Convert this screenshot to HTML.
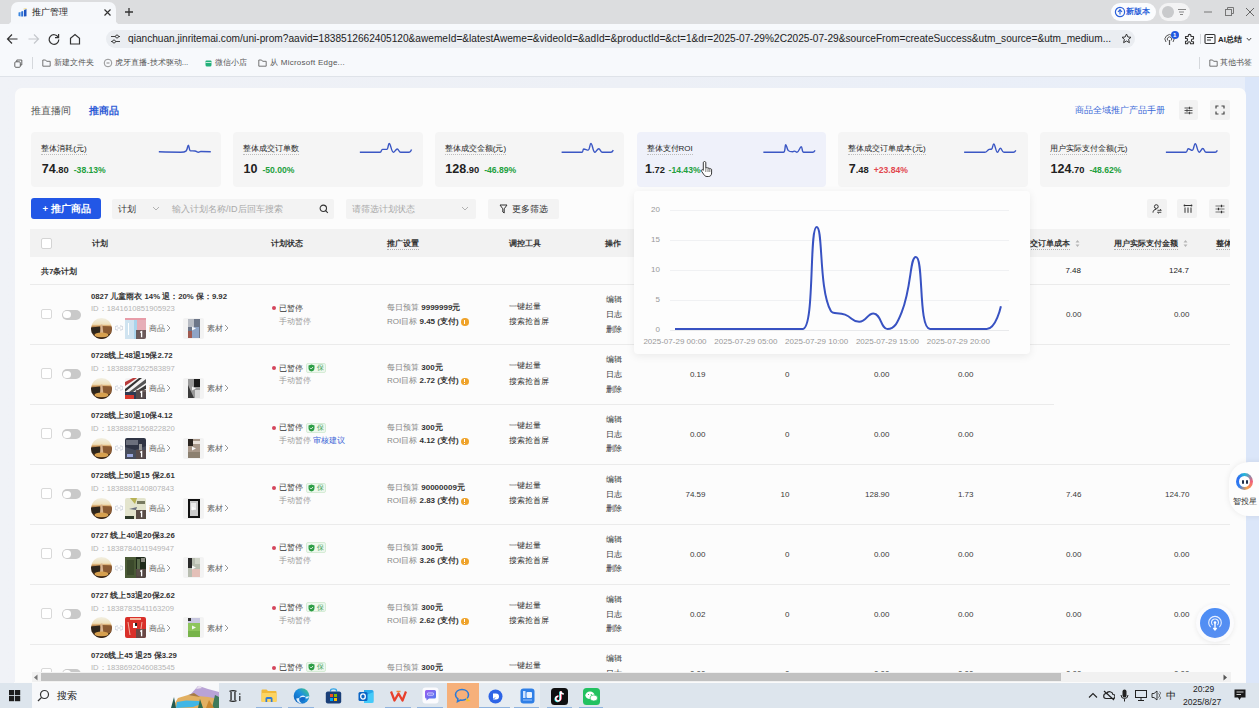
<!DOCTYPE html>
<html><head><meta charset="utf-8"><style>
html,body{margin:0;padding:0}
body{width:1259px;height:708px;overflow:hidden;position:relative;font-family:"Liberation Sans",sans-serif;background:#fff}
.r{position:absolute}
.t{position:absolute;white-space:nowrap}
b{font-weight:700}
</style></head><body>
<div class="r" style="left:0.0px;top:0.0px;width:1259.0px;height:24.0px;background:#dcdddf;"></div>
<div class="r" style="left:10.5px;top:1.5px;width:105.5px;height:23.0px;background:#f6f8fb;border-radius:7px 7px 0 0"></div>
<div class="r" style="left:6.5px;top:20.0px;width:4.0px;height:4.0px;background:radial-gradient(circle at 0 0,#dcdddf 4px,#f6f8fb 4.5px);"></div>
<div class="r" style="left:116.0px;top:20.0px;width:4.0px;height:4.0px;background:radial-gradient(circle at 100% 0,#dcdddf 4px,#f6f8fb 4.5px);"></div>
<svg class="r" style="left:17.5px;top:7.5px;" width="9" height="9" viewBox="0 0 9 9"><path d="M0.5 4.5L2.5 4V8.5L0.5 8Z" fill="#3a86e0"/><path d="M3.2 3.5L5.2 3V8.5L3.2 8.5Z" fill="#2a6fd6"/><path d="M6 2L8.5 1V8.2L6 8.5Z" fill="#1f55c0"/><path d="M5.5 1L8.5 0.5" stroke="#f5d36a" stroke-width="0.8"/></svg>
<div class="t " style="left:31.5px;top:5.0px;font-size:8.8px;line-height:14px;color:#222;font-weight:400;">推广管理</div>
<svg class="r" style="left:102.5px;top:7.5px;" width="9" height="9" viewBox="0 0 9 9"><path d="M1.5 1.5L7.5 7.5M7.5 1.5L1.5 7.5" stroke="#333" stroke-width="1.2"/></svg>
<svg class="r" style="left:124px;top:7px;" width="10" height="10" viewBox="0 0 10 10"><path d="M5 1V9M1 5H9" stroke="#333" stroke-width="1.3"/></svg>
<div class="r" style="left:1111.0px;top:3.0px;width:45.0px;height:17.5px;background:#fbfcfe;border-radius:9px"></div>
<svg class="r" style="left:1114px;top:6px;" width="12" height="12" viewBox="0 0 12 12"><circle cx="6" cy="6" r="4.6" fill="none" stroke="#2b5fd9" stroke-width="1.2"/><path d="M6 3.6V8.4M4 6L6 3.6 8 6" stroke="#2b5fd9" stroke-width="1.1" fill="none"/></svg>
<div class="t " style="left:1126.0px;top:5.0px;font-size:8px;line-height:14px;color:#2b5fd9;font-weight:700;">新版本</div>
<div class="r" style="left:1159.0px;top:3.0px;width:31.0px;height:17.5px;background:#f3f3f4;border-radius:9px"></div>
<div class="r" style="left:1162.0px;top:5.5px;width:12.0px;height:12.0px;background:#c9cacc;border-radius:50%"></div>
<svg class="r" style="left:1177px;top:8px;" width="10" height="8" viewBox="0 0 10 8"><path d="M1 1.5H9M2 4H7M3 6.5H6" stroke="#888" stroke-width="1.2"/></svg>
<svg class="r" style="left:1203px;top:6px;" width="10" height="12" viewBox="0 0 10 12"><path d="M1 6H9" stroke="#777" stroke-width="1"/></svg>
<svg class="r" style="left:1224px;top:6px;" width="10" height="12" viewBox="0 0 10 12"><rect x="1.5" y="3.5" width="6" height="6" fill="none" stroke="#777"/><path d="M3.5 3.5V1.5H9.5V7.5H7.5" fill="none" stroke="#777"/></svg>
<svg class="r" style="left:1245px;top:7px;" width="10" height="10" viewBox="0 0 10 10"><path d="M1 1L9 9M9 1L1 9" stroke="#666" stroke-width="1"/></svg>
<div class="r" style="left:0.0px;top:24.0px;width:1259.0px;height:53.0px;background:#f7f9fc;"></div>
<svg class="r" style="left:6px;top:33px;" width="13" height="12" viewBox="0 0 13 12"><path d="M11.5 6H1.5M6 1.5L1.5 6 6 10.5" fill="none" stroke="#333" stroke-width="1.2"/></svg>
<svg class="r" style="left:27px;top:33px;" width="13" height="12" viewBox="0 0 13 12"><path d="M1.5 6H11.5M7 1.5L11.5 6 7 10.5" fill="none" stroke="#c5c8cc" stroke-width="1.2"/></svg>
<svg class="r" style="left:48px;top:33px;" width="12" height="12" viewBox="0 0 12 12"><path d="M10.2 4.2A4.8 4.8 0 1 0 10.8 6.5" fill="none" stroke="#333" stroke-width="1.2"/><path d="M10.6 1V4.6H7" fill="none" stroke="#333" stroke-width="1.2"/></svg>
<svg class="r" style="left:69px;top:33px;" width="12" height="12" viewBox="0 0 12 12"><path d="M1.5 11V5.2L6 1.5 10.5 5.2V11Z" fill="none" stroke="#333" stroke-width="1.2"/></svg>
<div class="r" style="left:106.0px;top:30.0px;width:1029.0px;height:17.5px;background:#eaedf1;border-radius:9px"></div>
<svg class="r" style="left:110px;top:34px;" width="11" height="10" viewBox="0 0 11 10"><path d="M1 2.5H5.5M8.5 2.5H10M1 7.5H2.5M5.5 7.5H10" stroke="#444" stroke-width="1"/><circle cx="7" cy="2.5" r="1.5" fill="none" stroke="#444"/><circle cx="4" cy="7.5" r="1.5" fill="none" stroke="#444"/></svg>
<div class="t url" style="left:128.0px;top:32.0px;font-size:10.15px;line-height:14px;color:#222;font-weight:400;">qianchuan.jinritemai.com/uni-prom?aavid=1838512662405120&amp;awemeId=&amp;latestAweme=&amp;videoId=&amp;adId=&amp;productId=&amp;ct=1&amp;dr=2025-07-29%2C2025-07-29&amp;sourceFrom=createSuccess&amp;utm_source=&amp;utm_medium...</div>
<svg class="r" style="left:1121px;top:33px;" width="11" height="11" viewBox="0 0 11 11"><path d="M5.5 1L6.9 4 10 4.3 7.6 6.4 8.4 9.7 5.5 8 2.6 9.7 3.4 6.4 1 4.3 4.1 4Z" fill="none" stroke="#333" stroke-width="1"/></svg>
<svg class="r" style="left:1163px;top:33px;" width="13" height="13" viewBox="0 0 13 13"><path d="M3 9A4.5 4.5 0 1 1 10 9" fill="none" stroke="#555" stroke-width="1"/><path d="M4.8 7.5A2.2 2.2 0 1 1 8.2 7.5" fill="none" stroke="#555" stroke-width="1"/><path d="M6.5 7V12" stroke="#555" stroke-width="1.2"/></svg>
<div class="r" style="left:1171.0px;top:31.0px;width:8.0px;height:8.0px;background:#2259e0;border-radius:50%"></div>
<div class="t " style="left:1173.0px;top:31.0px;font-size:6px;line-height:8px;color:#fff;font-weight:700;">1</div>
<svg class="r" style="left:1184px;top:33px;" width="12" height="12" viewBox="0 0 12 12"><path d="M1.5 3.5H4.2V2.8A1.4 1.4 0 0 1 7 2.8V3.5H9.5V6H8.8A1.4 1.4 0 0 0 8.8 8.8H9.5V10.8H6.5V10.2A1.4 1.4 0 0 0 3.7 10.2V10.8H1.5V8.2H2.2A1.4 1.4 0 0 0 2.2 5.4H1.5Z" fill="none" stroke="#333" stroke-width="1.1" stroke-linejoin="round"/></svg>
<div class="r" style="left:1200.0px;top:34.0px;width:1.0px;height:10.0px;background:#d5d8dc;"></div>
<svg class="r" style="left:1204px;top:33px;" width="12" height="12" viewBox="0 0 12 12"><rect x="1" y="1.5" width="10" height="9" rx="1" fill="none" stroke="#333" stroke-width="1.1"/><path d="M3 4.5H9M3 7H7" stroke="#333" stroke-width="1"/></svg>
<div class="t " style="left:1218.0px;top:32.5px;font-size:7.8px;line-height:14px;color:#222;font-weight:700;">AI总结</div>
<svg class="r" style="left:1246px;top:37px;" width="6" height="5" viewBox="0 0 6 5"><path d="M0.8 1L3 3.4 5.2 1" fill="none" stroke="#444" stroke-width="1"/></svg>
<svg class="r" style="left:14px;top:58.5px;" width="9" height="9" viewBox="0 0 9 9"><rect x="0.8" y="2.8" width="5.5" height="5.5" rx="1" fill="none" stroke="#555" stroke-width="0.9"/><path d="M2.8 2.8V1H7.8V6H6.3" fill="none" stroke="#555" stroke-width="0.9"/></svg>
<div class="r" style="left:32.0px;top:57.0px;width:1.0px;height:12.0px;background:#d5d8dc;"></div>
<svg class="r" style="left:42px;top:58.5px;" width="9" height="8" viewBox="0 0 9 8"><path d="M0.8 1H3.6L4.6 2.3H8.2V7.2H0.8Z" fill="none" stroke="#666" stroke-width="0.9"/></svg>
<div class="t " style="left:54.0px;top:56.0px;font-size:8px;line-height:14px;color:#555;font-weight:400;">新建文件夹</div>
<svg class="r" style="left:103px;top:58px;" width="10" height="10" viewBox="0 0 10 10"><circle cx="5" cy="5" r="3.8" fill="none" stroke="#888" stroke-width="0.9"/><path d="M3.5 5H6.5" stroke="#888"/></svg>
<div class="t " style="left:115.0px;top:56.0px;font-size:8px;line-height:14px;color:#555;font-weight:400;">虎牙直播-技术驱动...</div>
<svg class="r" style="left:205px;top:59.5px;" width="7" height="7" viewBox="0 0 7 7"><path d="M0.5 1.5Q0.5 0.5 1.5 0.5H5.5Q6.5 0.5 6.5 1.5V5Q6.5 6.5 5 6.5H2Q0.5 6.5 0.5 5Z" fill="#22b07a"/><path d="M0.5 2.5H6.5" stroke="#d8f5e8" stroke-width="0.9"/></svg>
<div class="t " style="left:215.0px;top:56.0px;font-size:8px;line-height:14px;color:#555;font-weight:400;">微信小店</div>
<svg class="r" style="left:258px;top:58.5px;" width="9" height="8" viewBox="0 0 9 8"><path d="M0.8 1H3.6L4.6 2.3H8.2V7.2H0.8Z" fill="none" stroke="#666" stroke-width="0.9"/></svg>
<div class="t " style="left:270.0px;top:56.0px;font-size:8px;line-height:14px;color:#555;font-weight:400;letter-spacing:0.25px">从 Microsoft Edge...</div>
<div class="r" style="left:1199.0px;top:57.0px;width:1.0px;height:12.0px;background:#d5d8dc;"></div>
<svg class="r" style="left:1209px;top:58.5px;" width="9" height="8" viewBox="0 0 9 8"><path d="M0.8 1H3.6L4.6 2.3H8.2V7.2H0.8Z" fill="none" stroke="#666" stroke-width="0.9"/></svg>
<div class="t " style="left:1220.0px;top:56.0px;font-size:8px;line-height:14px;color:#555;font-weight:400;">其他书签</div>
<div class="r" style="left:0.0px;top:76.0px;width:1259.0px;height:1.0px;background:#dfe3e9;"></div>
<div class="r" style="left:0.0px;top:77.0px;width:1259.0px;height:606.0px;background:linear-gradient(90deg,#f0f2f7 0%,#edf0f6 50%,#e8eef9 100%);"></div>
<div class="r" style="left:1245.0px;top:77.0px;width:14.0px;height:606.0px;background:#dbe6f9;"></div>
<div class="r" style="left:14.5px;top:88.3px;width:1231.0px;height:600.0px;background:#fcfcfc;border-radius:7px 7px 0 0"></div>
<div class="t " style="left:30.5px;top:104.0px;font-size:10.1px;line-height:14px;color:#555;font-weight:400;">推直播间</div>
<div class="t " style="left:88.5px;top:104.0px;font-size:9.9px;line-height:14px;color:#2e5bd6;font-weight:700;">推商品</div>
<div class="t " style="left:1075.0px;top:103.0px;font-size:9.2px;line-height:14px;color:#3b6ad8;font-weight:400;">商品全域推广产品手册</div>
<div class="r" style="left:1178.5px;top:99.8px;width:19.0px;height:20.0px;background:#f2f2f2;border-radius:2px"></div>
<svg class="r" style="left:1183.5px;top:105.5px;" width="9" height="9" viewBox="0 0 9 9"><path d="M0.5 2H8.5M0.5 4.5H8.5M0.5 7H8.5" stroke="#444" stroke-width="0.9"/><path d="M5.5 0.8V3.2M3 3.3V5.7M5.5 5.8V8.2" stroke="#444" stroke-width="1.1"/></svg>
<div class="r" style="left:1209.5px;top:99.8px;width:20.5px;height:20.0px;background:#f2f2f2;border-radius:2px"></div>
<svg class="r" style="left:1214.5px;top:105.2px;" width="10" height="10" viewBox="0 0 10 10"><path d="M1 3.5V1H3.5M6.5 1H9V3.5M9 6.5V9H6.5M3.5 9H1V6.5" fill="none" stroke="#444" stroke-width="1.2"/></svg>
<div class="r" style="left:31.3px;top:131.5px;width:189.7px;height:55.5px;background:#f5f5f5;border-radius:4px"></div>
<div class="t " style="left:41.3px;top:142.5px;font-size:8px;line-height:11px;color:#262626;font-weight:400;border-bottom:1px dotted #bdbdbd;line-height:11px">整体消耗(元)</div>
<div class="t" style="left:41.8px;top:159px;line-height:18px;color:#222;white-space:nowrap"><span style="font-size:12.5px;font-weight:700">74</span><span style="font-size:9.4px;font-weight:700">.80</span><span style="font-size:8.6px;font-weight:700;color:#22a03c;margin-left:5px">-38.13%</span></div>
<div class="r" style="left:233.1px;top:131.5px;width:189.7px;height:55.5px;background:#f5f5f5;border-radius:4px"></div>
<div class="t " style="left:243.1px;top:142.5px;font-size:8px;line-height:11px;color:#262626;font-weight:400;border-bottom:1px dotted #bdbdbd;line-height:11px">整体成交订单数</div>
<div class="t" style="left:243.55px;top:159px;line-height:18px;color:#222;white-space:nowrap"><span style="font-size:12.5px;font-weight:700">10</span><span style="font-size:9.4px;font-weight:700"></span><span style="font-size:8.6px;font-weight:700;color:#22a03c;margin-left:5px">-50.00%</span></div>
<div class="r" style="left:434.8px;top:131.5px;width:189.7px;height:55.5px;background:#f5f5f5;border-radius:4px"></div>
<div class="t " style="left:444.8px;top:142.5px;font-size:8px;line-height:11px;color:#262626;font-weight:400;border-bottom:1px dotted #bdbdbd;line-height:11px">整体成交金额(元)</div>
<div class="t" style="left:445.3px;top:159px;line-height:18px;color:#222;white-space:nowrap"><span style="font-size:12.5px;font-weight:700">128</span><span style="font-size:9.4px;font-weight:700">.90</span><span style="font-size:8.6px;font-weight:700;color:#22a03c;margin-left:5px">-46.89%</span></div>
<div class="r" style="left:636.5px;top:131.5px;width:189.7px;height:55.5px;background:#eff1fa;border-radius:4px"></div>
<div class="t " style="left:646.5px;top:142.5px;font-size:8px;line-height:11px;color:#262626;font-weight:400;border-bottom:1px dotted #bdbdbd;line-height:11px">整体支付ROI</div>
<div class="t" style="left:645.05px;top:159px;line-height:18px;color:#222;white-space:nowrap"><span style="font-size:12.5px;font-weight:700">1</span><span style="font-size:9.4px;font-weight:700">.72</span><span style="font-size:8.6px;font-weight:700;color:#22a03c;margin-left:3.5px">-14.43%</span></div>
<div class="r" style="left:838.3px;top:131.5px;width:189.7px;height:55.5px;background:#f5f5f5;border-radius:4px"></div>
<div class="t " style="left:848.3px;top:142.5px;font-size:8px;line-height:11px;color:#262626;font-weight:400;border-bottom:1px dotted #bdbdbd;line-height:11px">整体成交订单成本(元)</div>
<div class="t" style="left:848.8px;top:159px;line-height:18px;color:#222;white-space:nowrap"><span style="font-size:12.5px;font-weight:700">7</span><span style="font-size:9.4px;font-weight:700">.48</span><span style="font-size:8.6px;font-weight:700;color:#e2474f;margin-left:5px">+23.84%</span></div>
<div class="r" style="left:1040.0px;top:131.5px;width:189.7px;height:55.5px;background:#f5f5f5;border-radius:4px"></div>
<div class="t " style="left:1050.0px;top:142.5px;font-size:8px;line-height:11px;color:#262626;font-weight:400;border-bottom:1px dotted #bdbdbd;line-height:11px">用户实际支付金额(元)</div>
<div class="t" style="left:1050.55px;top:159px;line-height:18px;color:#222;white-space:nowrap"><span style="font-size:12.5px;font-weight:700">124</span><span style="font-size:9.4px;font-weight:700">.70</span><span style="font-size:8.6px;font-weight:700;color:#22a03c;margin-left:5px">-48.62%</span></div>
<div class="r" style="left:30.5px;top:198.0px;width:70.0px;height:20.5px;background:#2257e6;border-radius:3px"></div>
<div class="t " style="left:42.5px;top:201.5px;font-size:9.5px;line-height:14px;color:#fff;font-weight:700;">+ 推广商品</div>
<div class="r" style="left:112.0px;top:198.5px;width:222.0px;height:20.5px;background:#f3f3f3;border-radius:2px"></div>
<div class="t " style="left:118.0px;top:202.0px;font-size:9px;line-height:14px;color:#333;font-weight:400;">计划</div>
<svg class="r" style="left:151.5px;top:206px;" width="8" height="5" viewBox="0 0 8 5"><path d="M1 1L4 4 7 1" fill="none" stroke="#aaa" stroke-width="0.9"/></svg>
<div class="t " style="left:172.0px;top:202.0px;font-size:9px;line-height:14px;color:#aaa;font-weight:400;">输入计划名称/ID后回车搜索</div>
<svg class="r" style="left:318.5px;top:204px;" width="10" height="10" viewBox="0 0 10 10"><circle cx="4.3" cy="4.3" r="3.2" fill="none" stroke="#333" stroke-width="1.05"/><path d="M6.6 6.6L8.8 8.8" stroke="#333" stroke-width="1.1"/></svg>
<div class="r" style="left:346.0px;top:198.5px;width:130.0px;height:20.5px;background:#f3f3f3;border-radius:2px"></div>
<div class="t " style="left:352.0px;top:202.0px;font-size:9px;line-height:14px;color:#aaa;font-weight:400;">请筛选计划状态</div>
<svg class="r" style="left:461px;top:206px;" width="8" height="5" viewBox="0 0 8 5"><path d="M1 1L4 4 7 1" fill="none" stroke="#aaa" stroke-width="0.9"/></svg>
<div class="r" style="left:488.0px;top:198.5px;width:71.0px;height:20.5px;background:#f3f3f3;border-radius:2px"></div>
<svg class="r" style="left:499px;top:204px;" width="9" height="10" viewBox="0 0 9 10"><path d="M1 1H8L5.2 4.8V9L3.8 8V4.8Z" fill="none" stroke="#333" stroke-width="1"/></svg>
<div class="t " style="left:512.0px;top:202.0px;font-size:9px;line-height:14px;color:#333;font-weight:400;">更多筛选</div>
<div class="r" style="left:1146.5px;top:198.5px;width:20.0px;height:19.5px;background:#f2f2f2;border-radius:2px"></div>
<div class="r" style="left:1177.0px;top:198.5px;width:20.0px;height:19.5px;background:#f2f2f2;border-radius:2px"></div>
<div class="r" style="left:1209.0px;top:198.5px;width:20.0px;height:19.5px;background:#f2f2f2;border-radius:2px"></div>
<svg class="r" style="left:1151.5px;top:203.5px;" width="10" height="10" viewBox="0 0 10 10"><circle cx="4.3" cy="2.6" r="1.9" fill="none" stroke="#333" stroke-width="1"/><path d="M1 8.6C1 6.5 2.5 5.3 4.3 5.3" fill="none" stroke="#333" stroke-width="1"/><path d="M5.5 6.3H9.3M8 5.2L9.3 6.3M5.5 8.3H9.3M6.8 9.4L5.5 8.3" fill="none" stroke="#333" stroke-width="0.9"/></svg>
<svg class="r" style="left:1183px;top:203.5px;" width="10" height="10" viewBox="0 0 10 10"><path d="M1.5 1.5H8.5" stroke="#333" stroke-width="1"/><circle cx="1.5" cy="1.5" r="0.9" fill="#333"/><circle cx="8.5" cy="1.5" r="0.9" fill="#333"/><path d="M2 3.5V8.8M5 3.5V8.8M8 3.5V8.8" stroke="#333" stroke-width="1"/></svg>
<svg class="r" style="left:1214.5px;top:203.5px;" width="10" height="10" viewBox="0 0 10 10"><path d="M0.5 2H9.5M0.5 5H9.5M0.5 8H9.5" stroke="#555" stroke-width="0.8"/><path d="M6.5 0.8V3.2M3.5 3.8V6.2M6.5 6.8V9.2" stroke="#333" stroke-width="1.2"/></svg>
<div class="r" style="left:30.0px;top:229.0px;width:1200.0px;height:27.5px;background:#f2f2f2;"></div>
<div class="r" style="left:41.0px;top:238.0px;width:10.5px;height:10.5px;background:#fff;border:1px solid #d4d4d4;border-radius:2px;box-sizing:border-box"></div>
<div class="t " style="left:92.0px;top:236.5px;font-size:8px;line-height:14px;color:#333;font-weight:700;">计划</div>
<div class="t " style="left:271.0px;top:236.5px;font-size:8px;line-height:14px;color:#333;font-weight:700;">计划状态</div>
<div class="t " style="left:387.0px;top:238.0px;font-size:8px;line-height:11px;color:#333;font-weight:700;border-bottom:1px dotted #b0b0b0;line-height:11px">推广设置</div>
<div class="t " style="left:509.0px;top:236.5px;font-size:8px;line-height:14px;color:#333;font-weight:700;">调控工具</div>
<div class="t " style="left:605.0px;top:236.5px;font-size:8px;line-height:14px;color:#333;font-weight:700;">操作</div>
<div class="t " style="right:189.0px;top:238.0px;font-size:8px;line-height:11px;color:#333;font-weight:700;border-bottom:1px dotted #b0b0b0;line-height:11px">整体成交订单成本</div>
<svg class="r" style="left:1075px;top:239px;" width="5" height="9" viewBox="0 0 5 9"><path d="M0.5 3.5L2.5 1 4.5 3.5Z M0.5 5.5L2.5 8 4.5 5.5Z" fill="#b5b5b5"/></svg>
<div class="t " style="right:81.0px;top:238.0px;font-size:8px;line-height:11px;color:#333;font-weight:700;border-bottom:1px dotted #b0b0b0;line-height:11px">用户实际支付金额</div>
<svg class="r" style="left:1183px;top:239px;" width="5" height="9" viewBox="0 0 5 9"><path d="M0.5 3.5L2.5 1 4.5 3.5Z M0.5 5.5L2.5 8 4.5 5.5Z" fill="#b5b5b5"/></svg>
<div class="r" style="left:1215px;top:229px;width:15px;height:28px;overflow:hidden"><div class="t" style="left:0.5px;top:9px;font-size:8px;line-height:11px;font-weight:700;color:#333;border-bottom:1px dotted #b0b0b0">整体成交</div></div>
<div class="t " style="left:41.0px;top:264.8px;font-size:8px;line-height:14px;color:#333;font-weight:700;">共7条计划</div>
<div class="t " style="right:178.0px;top:264.0px;font-size:8px;line-height:14px;color:#222;font-weight:400;">7.48</div>
<div class="t " style="right:70.0px;top:264.0px;font-size:8px;line-height:14px;color:#222;font-weight:400;">124.7</div>
<div class="r" style="left:30.0px;top:284.0px;width:1200.0px;height:1.0px;background:#ebebeb;"></div>
<div class="r" style="left:30.0px;top:344.0px;width:1200.0px;height:1.0px;background:#ebebeb;"></div>
<div class="r" style="left:41.0px;top:308.5px;width:10.5px;height:10.5px;background:#fff;border:1px solid #d9d9d9;border-radius:2px;box-sizing:border-box"></div>
<div class="r" style="left:62.0px;top:309.5px;width:18.5px;height:10.0px;background:#c9c9c9;border-radius:5px"></div>
<div class="r" style="left:63.3px;top:310.8px;width:7.4px;height:7.4px;background:#fff;border-radius:50%"></div>
<div class="t " style="left:91.0px;top:289.5px;font-size:7.75px;line-height:14px;color:#333;font-weight:700;">0827 儿童雨衣 14% 退：20% 保：9.92</div>
<div class="t " style="left:91.0px;top:302.0px;font-size:7.65px;line-height:14px;color:#b5b5b5;font-weight:400;">ID：1841610851905923</div>
<div class="r" style="left:90.8px;top:317.8px;width:21px;height:21px;border-radius:50%;overflow:hidden"><svg width="21" height="21" viewBox="0 0 21 21" style="display:block"><defs><linearGradient id="avg0" x1="0" y1="0" x2="0" y2="1"><stop offset="0" stop-color="#f2efe2"/><stop offset="0.3" stop-color="#eee0bc"/><stop offset="0.38" stop-color="#d4a060"/><stop offset="0.5" stop-color="#6a4426"/><stop offset="0.75" stop-color="#3a2818"/><stop offset="1" stop-color="#2a1a10"/></linearGradient></defs><rect width="21" height="21" fill="url(#avg0)"/><path d="M11 8L21 8.5V16H11Z" fill="#8a5a32"/><path d="M0 9.5L9 8.5V15H0Z" fill="#2e261c"/><path d="M9.8 6.5H11.4L12.3 15.5H9Z" fill="#d6b28e"/><ellipse cx="10.5" cy="17" rx="7" ry="2.4" fill="#d6a050"/><path d="M0 19.5H21V21H0Z" fill="#3a2414"/></svg></div>
<svg class="r" style="left:115px;top:325.0px;" width="8" height="6" viewBox="0 0 8 6"><path d="M3 1H2A2 2 0 0 0 2 5H3M5 1H6A2 2 0 0 1 6 5H5M2.5 3H5.5" fill="none" stroke="#c5cbd6" stroke-width="0.9"/></svg>
<svg class="r" style="left:125px;top:317.8px" width="21" height="21" viewBox="0 0 21 21"><rect width="21" height="21" rx="2" fill="#f0d6dc"/><rect x="0" y="2" width="9" height="19" fill="#cfe3f0"/><rect x="9" y="2" width="3" height="19" fill="#a9d4ec"/><rect x="12" y="2" width="9" height="12" fill="#e6aeb8"/><rect x="0" y="0" width="21" height="2" fill="#e79ca8"/><rect x="3" y="5" width="1" height="12" fill="#fff"/><path d="M11 12H21V19A2 2 0 0 1 19 21H11Z" fill="#5a4a48" opacity="0.88"/><path d="M15.2 14.3L16.6 13.6V19.3" fill="none" stroke="#fff" stroke-width="1.3"/></svg>
<div class="t " style="left:149.0px;top:322.0px;font-size:8px;line-height:14px;color:#666;font-weight:400;">商品</div>
<svg class="r" style="left:166px;top:324.3px;" width="5" height="8" viewBox="0 0 5 8"><path d="M1 1L4 4 1 7" fill="none" stroke="#999" stroke-width="1"/></svg>
<svg class="r" style="left:183px;top:317.8px" width="21" height="21" viewBox="0 0 21 21"><rect width="21" height="21" rx="2" fill="#f3f3f3"/><rect x="5" y="1" width="12" height="19" fill="#6d7688"/><rect x="5" y="1" width="6" height="8" fill="#b8bcc4"/><rect x="9" y="9" width="7" height="11" fill="#8ea4c6"/><rect x="5" y="13" width="4" height="7" fill="#a05a50"/><path d="M9 8.5L13 10.5 9 12.5Z" fill="#fff" opacity="0.9"/></svg>
<div class="t " style="left:207.0px;top:322.0px;font-size:8px;line-height:14px;color:#666;font-weight:400;">素材</div>
<svg class="r" style="left:224.3px;top:324.3px;" width="5" height="8" viewBox="0 0 5 8"><path d="M1 1L4 4 1 7" fill="none" stroke="#999" stroke-width="1"/></svg>
<div class="r" style="left:271.9px;top:306.2px;width:4.0px;height:4.0px;background:#d4465c;border-radius:50%"></div>
<div class="t " style="left:279.0px;top:301.6px;font-size:8px;line-height:14px;color:#333;font-weight:400;">已暂停</div>
<div class="t " style="left:279.0px;top:314.5px;font-size:8px;line-height:14px;color:#999;font-weight:400;">手动暂停</div>
<div class="t" style="left:387px;top:301.3px;font-size:8px;line-height:14px;color:#888">每日预算 <b style="color:#333">9999999元</b></div>
<div class="t" style="left:387px;top:314.5px;font-size:8px;line-height:14px;color:#888">ROI目标 <b style="color:#333">9.45 (支付)</b></div>
<div class="r" style="left:461.0px;top:318.0px;width:7.5px;height:7.5px;background:#efa32b;border-radius:50%"></div>
<div class="r" style="left:464.2px;top:319.5px;width:1.1px;height:3.0px;background:#fff;"></div>
<div class="r" style="left:464.2px;top:323.2px;width:1.1px;height:1.0px;background:#fff;"></div>
<div class="t " style="left:509.0px;top:299.5px;font-size:8px;line-height:14px;color:#333;font-weight:400;">一键起量</div>
<div class="t " style="left:509.0px;top:314.6px;font-size:8px;line-height:14px;color:#333;font-weight:400;">搜索抢首屏</div>
<div class="t " style="left:605.5px;top:293.0px;font-size:8px;line-height:14px;color:#333;font-weight:400;">编辑</div>
<div class="t " style="left:605.5px;top:308.0px;font-size:8px;line-height:14px;color:#333;font-weight:400;">日志</div>
<div class="t " style="left:605.5px;top:322.6px;font-size:8px;line-height:14px;color:#333;font-weight:400;">删除</div>
<div class="t " style="right:553.5px;top:308.0px;font-size:8px;line-height:14px;color:#3a3a3a;font-weight:400;">0.00</div>
<div class="t " style="right:469.5px;top:308.0px;font-size:8px;line-height:14px;color:#3a3a3a;font-weight:400;">0</div>
<div class="t " style="right:369.5px;top:308.0px;font-size:8px;line-height:14px;color:#3a3a3a;font-weight:400;">0.00</div>
<div class="t " style="right:285.5px;top:308.0px;font-size:8px;line-height:14px;color:#3a3a3a;font-weight:400;">0.00</div>
<div class="t " style="right:177.5px;top:308.0px;font-size:8px;line-height:14px;color:#3a3a3a;font-weight:400;">0.00</div>
<div class="t " style="right:69.5px;top:308.0px;font-size:8px;line-height:14px;color:#3a3a3a;font-weight:400;">0.00</div>
<div class="r" style="left:30.0px;top:403.9px;width:1024.0px;height:1.0px;background:#ebebeb;"></div>
<div class="r" style="left:41.0px;top:368.4px;width:10.5px;height:10.5px;background:#fff;border:1px solid #d9d9d9;border-radius:2px;box-sizing:border-box"></div>
<div class="r" style="left:62.0px;top:369.4px;width:18.5px;height:10.0px;background:#c9c9c9;border-radius:5px"></div>
<div class="r" style="left:63.3px;top:370.7px;width:7.4px;height:7.4px;background:#fff;border-radius:50%"></div>
<div class="t " style="left:91.0px;top:349.4px;font-size:7.75px;line-height:14px;color:#333;font-weight:700;">0728线上48退15保2.72</div>
<div class="t " style="left:91.0px;top:361.9px;font-size:7.65px;line-height:14px;color:#b5b5b5;font-weight:400;">ID：1838887362583897</div>
<div class="r" style="left:90.8px;top:377.7px;width:21px;height:21px;border-radius:50%;overflow:hidden"><svg width="21" height="21" viewBox="0 0 21 21" style="display:block"><defs><linearGradient id="avg1" x1="0" y1="0" x2="0" y2="1"><stop offset="0" stop-color="#f2efe2"/><stop offset="0.3" stop-color="#eee0bc"/><stop offset="0.38" stop-color="#d4a060"/><stop offset="0.5" stop-color="#6a4426"/><stop offset="0.75" stop-color="#3a2818"/><stop offset="1" stop-color="#2a1a10"/></linearGradient></defs><rect width="21" height="21" fill="url(#avg1)"/><path d="M11 8L21 8.5V16H11Z" fill="#8a5a32"/><path d="M0 9.5L9 8.5V15H0Z" fill="#2e261c"/><path d="M9.8 6.5H11.4L12.3 15.5H9Z" fill="#d6b28e"/><ellipse cx="10.5" cy="17" rx="7" ry="2.4" fill="#d6a050"/><path d="M0 19.5H21V21H0Z" fill="#3a2414"/></svg></div>
<svg class="r" style="left:115px;top:384.9px;" width="8" height="6" viewBox="0 0 8 6"><path d="M3 1H2A2 2 0 0 0 2 5H3M5 1H6A2 2 0 0 1 6 5H5M2.5 3H5.5" fill="none" stroke="#c5cbd6" stroke-width="0.9"/></svg>
<svg class="r" style="left:125px;top:377.7px" width="21" height="21" viewBox="0 0 21 21"><rect width="21" height="21" rx="2" fill="#f4f4f4"/><path d="M0 4L8 0H12L0 8Z" fill="#b73a3a"/><path d="M0 11L14 0H17L0 14Z" fill="#333"/><path d="M4 14L21 1V5L8 14Z" fill="#555"/><path d="M10 14L21 7V11L14 14Z" fill="#3a3a3a"/><rect x="0" y="14" width="21" height="7" fill="#2f3a52"/><rect x="0" y="17" width="9" height="4" fill="#d83a2e"/><path d="M11 12H21V19A2 2 0 0 1 19 21H11Z" fill="#5a4a48" opacity="0.88"/><path d="M15.2 14.3L16.6 13.6V19.3" fill="none" stroke="#fff" stroke-width="1.3"/></svg>
<div class="t " style="left:149.0px;top:381.9px;font-size:8px;line-height:14px;color:#666;font-weight:400;">商品</div>
<svg class="r" style="left:166px;top:384.2px;" width="5" height="8" viewBox="0 0 5 8"><path d="M1 1L4 4 1 7" fill="none" stroke="#999" stroke-width="1"/></svg>
<svg class="r" style="left:183px;top:377.7px" width="21" height="21" viewBox="0 0 21 21"><rect width="21" height="21" rx="2" fill="#f3f3f3"/><rect x="5" y="1" width="12" height="19" fill="#9a9a9a"/><rect x="11" y="1" width="6" height="8" fill="#1a1a1a"/><path d="M5 7L11 20H5Z" fill="#3a3a3a"/><rect x="12" y="12" width="5" height="8" fill="#d8d8d8"/><path d="M9 8.5L13 10.5 9 12.5Z" fill="#fff" opacity="0.9"/></svg>
<div class="t " style="left:207.0px;top:381.9px;font-size:8px;line-height:14px;color:#666;font-weight:400;">素材</div>
<svg class="r" style="left:224.3px;top:384.2px;" width="5" height="8" viewBox="0 0 5 8"><path d="M1 1L4 4 1 7" fill="none" stroke="#999" stroke-width="1"/></svg>
<div class="r" style="left:271.9px;top:366.1px;width:4.0px;height:4.0px;background:#d4465c;border-radius:50%"></div>
<div class="t " style="left:279.0px;top:361.5px;font-size:8px;line-height:14px;color:#333;font-weight:400;">已暂停</div>
<div class="r" style="left:305.5px;top:362.7px;width:20.5px;height:10.2px;background:#eef8ee;border:1px solid #d6ecd6;border-radius:2px;box-sizing:border-box"></div>
<svg class="r" style="left:308px;top:363.9px;" width="7" height="8" viewBox="0 0 7 8"><path d="M3.5 0.5L6.5 1.6V4A3.6 3.6 0 0 1 3.5 7.5 3.6 3.6 0 0 1 0.5 4V1.6Z" fill="#2d9d45"/><path d="M2 3.8L3.2 5 5 3" fill="none" stroke="#fff" stroke-width="0.8"/></svg>
<div class="t " style="left:317.0px;top:362.9px;font-size:7px;line-height:10px;color:#3a9d4e;font-weight:400;">保</div>
<div class="t " style="left:279.0px;top:374.4px;font-size:8px;line-height:14px;color:#999;font-weight:400;">手动暂停</div>
<div class="t" style="left:387px;top:361.2px;font-size:8px;line-height:14px;color:#888">每日预算 <b style="color:#333">300元</b></div>
<div class="t" style="left:387px;top:374.4px;font-size:8px;line-height:14px;color:#888">ROI目标 <b style="color:#333">2.72 (支付)</b></div>
<div class="r" style="left:461.0px;top:377.9px;width:7.5px;height:7.5px;background:#efa32b;border-radius:50%"></div>
<div class="r" style="left:464.2px;top:379.4px;width:1.1px;height:3.0px;background:#fff;"></div>
<div class="r" style="left:464.2px;top:383.1px;width:1.1px;height:1.0px;background:#fff;"></div>
<div class="t " style="left:509.0px;top:359.4px;font-size:8px;line-height:14px;color:#333;font-weight:400;">一键起量</div>
<div class="t " style="left:509.0px;top:374.5px;font-size:8px;line-height:14px;color:#333;font-weight:400;">搜索抢首屏</div>
<div class="t " style="left:605.5px;top:352.9px;font-size:8px;line-height:14px;color:#333;font-weight:400;">编辑</div>
<div class="t " style="left:605.5px;top:367.9px;font-size:8px;line-height:14px;color:#333;font-weight:400;">日志</div>
<div class="t " style="left:605.5px;top:382.5px;font-size:8px;line-height:14px;color:#333;font-weight:400;">删除</div>
<div class="t " style="right:553.5px;top:367.9px;font-size:8px;line-height:14px;color:#3a3a3a;font-weight:400;">0.19</div>
<div class="t " style="right:469.5px;top:367.9px;font-size:8px;line-height:14px;color:#3a3a3a;font-weight:400;">0</div>
<div class="t " style="right:369.5px;top:367.9px;font-size:8px;line-height:14px;color:#3a3a3a;font-weight:400;">0.00</div>
<div class="t " style="right:285.5px;top:367.9px;font-size:8px;line-height:14px;color:#3a3a3a;font-weight:400;">0.00</div>
<div class="r" style="left:30.0px;top:463.8px;width:1200.0px;height:1.0px;background:#ebebeb;"></div>
<div class="r" style="left:41.0px;top:428.3px;width:10.5px;height:10.5px;background:#fff;border:1px solid #d9d9d9;border-radius:2px;box-sizing:border-box"></div>
<div class="r" style="left:62.0px;top:429.3px;width:18.5px;height:10.0px;background:#c9c9c9;border-radius:5px"></div>
<div class="r" style="left:63.3px;top:430.6px;width:7.4px;height:7.4px;background:#fff;border-radius:50%"></div>
<div class="t " style="left:91.0px;top:409.3px;font-size:7.75px;line-height:14px;color:#333;font-weight:700;">0728线上30退10保4.12</div>
<div class="t " style="left:91.0px;top:421.8px;font-size:7.65px;line-height:14px;color:#b5b5b5;font-weight:400;">ID：1838882156822820</div>
<div class="r" style="left:90.8px;top:437.6px;width:21px;height:21px;border-radius:50%;overflow:hidden"><svg width="21" height="21" viewBox="0 0 21 21" style="display:block"><defs><linearGradient id="avg2" x1="0" y1="0" x2="0" y2="1"><stop offset="0" stop-color="#f2efe2"/><stop offset="0.3" stop-color="#eee0bc"/><stop offset="0.38" stop-color="#d4a060"/><stop offset="0.5" stop-color="#6a4426"/><stop offset="0.75" stop-color="#3a2818"/><stop offset="1" stop-color="#2a1a10"/></linearGradient></defs><rect width="21" height="21" fill="url(#avg2)"/><path d="M11 8L21 8.5V16H11Z" fill="#8a5a32"/><path d="M0 9.5L9 8.5V15H0Z" fill="#2e261c"/><path d="M9.8 6.5H11.4L12.3 15.5H9Z" fill="#d6b28e"/><ellipse cx="10.5" cy="17" rx="7" ry="2.4" fill="#d6a050"/><path d="M0 19.5H21V21H0Z" fill="#3a2414"/></svg></div>
<svg class="r" style="left:115px;top:444.8px;" width="8" height="6" viewBox="0 0 8 6"><path d="M3 1H2A2 2 0 0 0 2 5H3M5 1H6A2 2 0 0 1 6 5H5M2.5 3H5.5" fill="none" stroke="#c5cbd6" stroke-width="0.9"/></svg>
<svg class="r" style="left:125px;top:437.6px" width="21" height="21" viewBox="0 0 21 21"><rect width="21" height="21" rx="2" fill="#2f3444"/><rect x="1" y="2" width="12" height="5" fill="#6b6f7c"/><path d="M0 9L10 12 21 8V21H0Z" fill="#474c5c"/><rect x="2" y="16" width="6" height="3" fill="#9aa6dc"/><rect x="14" y="6" width="3" height="8" fill="#9a9a9a"/><path d="M11 12H21V19A2 2 0 0 1 19 21H11Z" fill="#5a4a48" opacity="0.88"/><path d="M15.2 14.3L16.6 13.6V19.3" fill="none" stroke="#fff" stroke-width="1.3"/></svg>
<div class="t " style="left:149.0px;top:441.8px;font-size:8px;line-height:14px;color:#666;font-weight:400;">商品</div>
<svg class="r" style="left:166px;top:444.1px;" width="5" height="8" viewBox="0 0 5 8"><path d="M1 1L4 4 1 7" fill="none" stroke="#999" stroke-width="1"/></svg>
<svg class="r" style="left:183px;top:437.6px" width="21" height="21" viewBox="0 0 21 21"><rect width="21" height="21" rx="2" fill="#f3f3f3"/><rect x="5" y="1" width="12" height="19" fill="#a8988a"/><rect x="5" y="1" width="5" height="7" fill="#2a2420"/><rect x="10" y="3" width="7" height="3" fill="#e8e0d8"/><rect x="5" y="14" width="12" height="6" fill="#8c8070"/><path d="M9 8.5L13 10.5 9 12.5Z" fill="#fff" opacity="0.9"/></svg>
<div class="t " style="left:207.0px;top:441.8px;font-size:8px;line-height:14px;color:#666;font-weight:400;">素材</div>
<svg class="r" style="left:224.3px;top:444.1px;" width="5" height="8" viewBox="0 0 5 8"><path d="M1 1L4 4 1 7" fill="none" stroke="#999" stroke-width="1"/></svg>
<div class="r" style="left:271.9px;top:426.0px;width:4.0px;height:4.0px;background:#d4465c;border-radius:50%"></div>
<div class="t " style="left:279.0px;top:421.4px;font-size:8px;line-height:14px;color:#333;font-weight:400;">已暂停</div>
<div class="r" style="left:305.5px;top:422.6px;width:20.5px;height:10.2px;background:#eef8ee;border:1px solid #d6ecd6;border-radius:2px;box-sizing:border-box"></div>
<svg class="r" style="left:308px;top:423.8px;" width="7" height="8" viewBox="0 0 7 8"><path d="M3.5 0.5L6.5 1.6V4A3.6 3.6 0 0 1 3.5 7.5 3.6 3.6 0 0 1 0.5 4V1.6Z" fill="#2d9d45"/><path d="M2 3.8L3.2 5 5 3" fill="none" stroke="#fff" stroke-width="0.8"/></svg>
<div class="t " style="left:317.0px;top:422.8px;font-size:7px;line-height:10px;color:#3a9d4e;font-weight:400;">保</div>
<div class="t " style="left:279.0px;top:434.3px;font-size:8px;line-height:14px;color:#999;font-weight:400;">手动暂停</div>
<div class="t " style="left:313.0px;top:434.3px;font-size:8px;line-height:14px;color:#3a62d6;font-weight:400;">审核建议</div>
<div class="t" style="left:387px;top:421.1px;font-size:8px;line-height:14px;color:#888">每日预算 <b style="color:#333">300元</b></div>
<div class="t" style="left:387px;top:434.3px;font-size:8px;line-height:14px;color:#888">ROI目标 <b style="color:#333">4.12 (支付)</b></div>
<div class="r" style="left:461.0px;top:437.8px;width:7.5px;height:7.5px;background:#efa32b;border-radius:50%"></div>
<div class="r" style="left:464.2px;top:439.3px;width:1.1px;height:3.0px;background:#fff;"></div>
<div class="r" style="left:464.2px;top:443.0px;width:1.1px;height:1.0px;background:#fff;"></div>
<div class="t " style="left:509.0px;top:419.3px;font-size:8px;line-height:14px;color:#333;font-weight:400;">一键起量</div>
<div class="t " style="left:509.0px;top:434.4px;font-size:8px;line-height:14px;color:#333;font-weight:400;">搜索抢首屏</div>
<div class="t " style="left:605.5px;top:412.8px;font-size:8px;line-height:14px;color:#333;font-weight:400;">编辑</div>
<div class="t " style="left:605.5px;top:427.8px;font-size:8px;line-height:14px;color:#333;font-weight:400;">日志</div>
<div class="t " style="left:605.5px;top:442.4px;font-size:8px;line-height:14px;color:#333;font-weight:400;">删除</div>
<div class="t " style="right:553.5px;top:427.8px;font-size:8px;line-height:14px;color:#3a3a3a;font-weight:400;">0.00</div>
<div class="t " style="right:469.5px;top:427.8px;font-size:8px;line-height:14px;color:#3a3a3a;font-weight:400;">0</div>
<div class="t " style="right:369.5px;top:427.8px;font-size:8px;line-height:14px;color:#3a3a3a;font-weight:400;">0.00</div>
<div class="t " style="right:285.5px;top:427.8px;font-size:8px;line-height:14px;color:#3a3a3a;font-weight:400;">0.00</div>
<div class="r" style="left:30.0px;top:523.7px;width:1200.0px;height:1.0px;background:#ebebeb;"></div>
<div class="r" style="left:41.0px;top:488.2px;width:10.5px;height:10.5px;background:#fff;border:1px solid #d9d9d9;border-radius:2px;box-sizing:border-box"></div>
<div class="r" style="left:62.0px;top:489.2px;width:18.5px;height:10.0px;background:#c9c9c9;border-radius:5px"></div>
<div class="r" style="left:63.3px;top:490.5px;width:7.4px;height:7.4px;background:#fff;border-radius:50%"></div>
<div class="t " style="left:91.0px;top:469.2px;font-size:7.75px;line-height:14px;color:#333;font-weight:700;">0728线上50退15 保2.61</div>
<div class="t " style="left:91.0px;top:481.7px;font-size:7.65px;line-height:14px;color:#b5b5b5;font-weight:400;">ID：1838881140807843</div>
<div class="r" style="left:90.8px;top:497.5px;width:21px;height:21px;border-radius:50%;overflow:hidden"><svg width="21" height="21" viewBox="0 0 21 21" style="display:block"><defs><linearGradient id="avg3" x1="0" y1="0" x2="0" y2="1"><stop offset="0" stop-color="#f2efe2"/><stop offset="0.3" stop-color="#eee0bc"/><stop offset="0.38" stop-color="#d4a060"/><stop offset="0.5" stop-color="#6a4426"/><stop offset="0.75" stop-color="#3a2818"/><stop offset="1" stop-color="#2a1a10"/></linearGradient></defs><rect width="21" height="21" fill="url(#avg3)"/><path d="M11 8L21 8.5V16H11Z" fill="#8a5a32"/><path d="M0 9.5L9 8.5V15H0Z" fill="#2e261c"/><path d="M9.8 6.5H11.4L12.3 15.5H9Z" fill="#d6b28e"/><ellipse cx="10.5" cy="17" rx="7" ry="2.4" fill="#d6a050"/><path d="M0 19.5H21V21H0Z" fill="#3a2414"/></svg></div>
<svg class="r" style="left:115px;top:504.7px;" width="8" height="6" viewBox="0 0 8 6"><path d="M3 1H2A2 2 0 0 0 2 5H3M5 1H6A2 2 0 0 1 6 5H5M2.5 3H5.5" fill="none" stroke="#c5cbd6" stroke-width="0.9"/></svg>
<svg class="r" style="left:125px;top:497.5px" width="21" height="21" viewBox="0 0 21 21"><rect width="21" height="21" rx="2" fill="#e3e4cd"/><path d="M5 0L10 6 12 0Z" fill="#b7b255"/><rect x="12" y="3" width="8" height="3" fill="#777a60"/><path d="M4 11L12 9 11 12Z" fill="#6a7080"/><rect x="0" y="18" width="9" height="3" fill="#2f3a2a"/><path d="M11 12H21V21H11Z" fill="#59643a"/><path d="M11 12H21V19A2 2 0 0 1 19 21H11Z" fill="#5a4a48" opacity="0.88"/><path d="M15.2 14.3L16.6 13.6V19.3" fill="none" stroke="#fff" stroke-width="1.3"/></svg>
<div class="t " style="left:149.0px;top:501.7px;font-size:8px;line-height:14px;color:#666;font-weight:400;">商品</div>
<svg class="r" style="left:166px;top:504.0px;" width="5" height="8" viewBox="0 0 5 8"><path d="M1 1L4 4 1 7" fill="none" stroke="#999" stroke-width="1"/></svg>
<svg class="r" style="left:183px;top:497.5px" width="21" height="21" viewBox="0 0 21 21"><rect width="21" height="21" rx="2" fill="#f3f3f3"/><rect x="5" y="1" width="12" height="19" fill="#111"/><rect x="7" y="3" width="8" height="15" fill="#c9c9c9"/><rect x="8" y="5" width="5" height="7" fill="#eee"/><path d="M9 8.5L13 10.5 9 12.5Z" fill="#fff" opacity="0.9"/></svg>
<div class="t " style="left:207.0px;top:501.7px;font-size:8px;line-height:14px;color:#666;font-weight:400;">素材</div>
<svg class="r" style="left:224.3px;top:504.0px;" width="5" height="8" viewBox="0 0 5 8"><path d="M1 1L4 4 1 7" fill="none" stroke="#999" stroke-width="1"/></svg>
<div class="r" style="left:271.9px;top:485.9px;width:4.0px;height:4.0px;background:#d4465c;border-radius:50%"></div>
<div class="t " style="left:279.0px;top:481.3px;font-size:8px;line-height:14px;color:#333;font-weight:400;">已暂停</div>
<div class="r" style="left:305.5px;top:482.5px;width:20.5px;height:10.2px;background:#eef8ee;border:1px solid #d6ecd6;border-radius:2px;box-sizing:border-box"></div>
<svg class="r" style="left:308px;top:483.7px;" width="7" height="8" viewBox="0 0 7 8"><path d="M3.5 0.5L6.5 1.6V4A3.6 3.6 0 0 1 3.5 7.5 3.6 3.6 0 0 1 0.5 4V1.6Z" fill="#2d9d45"/><path d="M2 3.8L3.2 5 5 3" fill="none" stroke="#fff" stroke-width="0.8"/></svg>
<div class="t " style="left:317.0px;top:482.7px;font-size:7px;line-height:10px;color:#3a9d4e;font-weight:400;">保</div>
<div class="t " style="left:279.0px;top:494.2px;font-size:8px;line-height:14px;color:#999;font-weight:400;">手动暂停</div>
<div class="t" style="left:387px;top:481.0px;font-size:8px;line-height:14px;color:#888">每日预算 <b style="color:#333">90000009元</b></div>
<div class="t" style="left:387px;top:494.2px;font-size:8px;line-height:14px;color:#888">ROI目标 <b style="color:#333">2.83 (支付)</b></div>
<div class="r" style="left:461.0px;top:497.7px;width:7.5px;height:7.5px;background:#efa32b;border-radius:50%"></div>
<div class="r" style="left:464.2px;top:499.2px;width:1.1px;height:3.0px;background:#fff;"></div>
<div class="r" style="left:464.2px;top:502.9px;width:1.1px;height:1.0px;background:#fff;"></div>
<div class="t " style="left:509.0px;top:479.2px;font-size:8px;line-height:14px;color:#333;font-weight:400;">一键起量</div>
<div class="t " style="left:509.0px;top:494.3px;font-size:8px;line-height:14px;color:#333;font-weight:400;">搜索抢首屏</div>
<div class="t " style="left:605.5px;top:472.7px;font-size:8px;line-height:14px;color:#333;font-weight:400;">编辑</div>
<div class="t " style="left:605.5px;top:487.7px;font-size:8px;line-height:14px;color:#333;font-weight:400;">日志</div>
<div class="t " style="left:605.5px;top:502.3px;font-size:8px;line-height:14px;color:#333;font-weight:400;">删除</div>
<div class="t " style="right:553.5px;top:487.7px;font-size:8px;line-height:14px;color:#3a3a3a;font-weight:400;">74.59</div>
<div class="t " style="right:469.5px;top:487.7px;font-size:8px;line-height:14px;color:#3a3a3a;font-weight:400;">10</div>
<div class="t " style="right:369.5px;top:487.7px;font-size:8px;line-height:14px;color:#3a3a3a;font-weight:400;">128.90</div>
<div class="t " style="right:285.5px;top:487.7px;font-size:8px;line-height:14px;color:#3a3a3a;font-weight:400;">1.73</div>
<div class="t " style="right:177.5px;top:487.7px;font-size:8px;line-height:14px;color:#3a3a3a;font-weight:400;">7.46</div>
<div class="t " style="right:69.5px;top:487.7px;font-size:8px;line-height:14px;color:#3a3a3a;font-weight:400;">124.70</div>
<div class="r" style="left:30.0px;top:583.6px;width:1200.0px;height:1.0px;background:#ebebeb;"></div>
<div class="r" style="left:41.0px;top:548.1px;width:10.5px;height:10.5px;background:#fff;border:1px solid #d9d9d9;border-radius:2px;box-sizing:border-box"></div>
<div class="r" style="left:62.0px;top:549.1px;width:18.5px;height:10.0px;background:#c9c9c9;border-radius:5px"></div>
<div class="r" style="left:63.3px;top:550.4px;width:7.4px;height:7.4px;background:#fff;border-radius:50%"></div>
<div class="t " style="left:91.0px;top:529.1px;font-size:7.75px;line-height:14px;color:#333;font-weight:700;">0727 线上40退20保3.26</div>
<div class="t " style="left:91.0px;top:541.6px;font-size:7.65px;line-height:14px;color:#b5b5b5;font-weight:400;">ID：1838784011949947</div>
<div class="r" style="left:90.8px;top:557.4px;width:21px;height:21px;border-radius:50%;overflow:hidden"><svg width="21" height="21" viewBox="0 0 21 21" style="display:block"><defs><linearGradient id="avg4" x1="0" y1="0" x2="0" y2="1"><stop offset="0" stop-color="#f2efe2"/><stop offset="0.3" stop-color="#eee0bc"/><stop offset="0.38" stop-color="#d4a060"/><stop offset="0.5" stop-color="#6a4426"/><stop offset="0.75" stop-color="#3a2818"/><stop offset="1" stop-color="#2a1a10"/></linearGradient></defs><rect width="21" height="21" fill="url(#avg4)"/><path d="M11 8L21 8.5V16H11Z" fill="#8a5a32"/><path d="M0 9.5L9 8.5V15H0Z" fill="#2e261c"/><path d="M9.8 6.5H11.4L12.3 15.5H9Z" fill="#d6b28e"/><ellipse cx="10.5" cy="17" rx="7" ry="2.4" fill="#d6a050"/><path d="M0 19.5H21V21H0Z" fill="#3a2414"/></svg></div>
<svg class="r" style="left:115px;top:564.6px;" width="8" height="6" viewBox="0 0 8 6"><path d="M3 1H2A2 2 0 0 0 2 5H3M5 1H6A2 2 0 0 1 6 5H5M2.5 3H5.5" fill="none" stroke="#c5cbd6" stroke-width="0.9"/></svg>
<svg class="r" style="left:125px;top:557.4px" width="21" height="21" viewBox="0 0 21 21"><rect width="21" height="21" rx="2" fill="#1f2a1a"/><rect x="0" y="0" width="11" height="21" fill="#4a5a36"/><rect x="2" y="3" width="7" height="15" fill="#3c4a2c"/><rect x="12" y="2" width="3" height="17" fill="#596b4a"/><rect x="16" y="1" width="4" height="4" fill="#8a8a80"/><path d="M11 12H21V19A2 2 0 0 1 19 21H11Z" fill="#5a4a48" opacity="0.88"/><path d="M15.2 14.3L16.6 13.6V19.3" fill="none" stroke="#fff" stroke-width="1.3"/></svg>
<div class="t " style="left:149.0px;top:561.6px;font-size:8px;line-height:14px;color:#666;font-weight:400;">商品</div>
<svg class="r" style="left:166px;top:563.9px;" width="5" height="8" viewBox="0 0 5 8"><path d="M1 1L4 4 1 7" fill="none" stroke="#999" stroke-width="1"/></svg>
<svg class="r" style="left:183px;top:557.4px" width="21" height="21" viewBox="0 0 21 21"><rect width="21" height="21" rx="2" fill="#f3f3f3"/><rect x="5" y="1" width="12" height="19" fill="#b8bdb0"/><rect x="5" y="1" width="4" height="10" fill="#2a2a2a"/><rect x="9" y="12" width="8" height="8" fill="#e4c0b8"/><rect x="12" y="1" width="5" height="6" fill="#d0d4c8"/><path d="M9 8.5L13 10.5 9 12.5Z" fill="#fff" opacity="0.9"/></svg>
<div class="t " style="left:207.0px;top:561.6px;font-size:8px;line-height:14px;color:#666;font-weight:400;">素材</div>
<svg class="r" style="left:224.3px;top:563.9px;" width="5" height="8" viewBox="0 0 5 8"><path d="M1 1L4 4 1 7" fill="none" stroke="#999" stroke-width="1"/></svg>
<div class="r" style="left:271.9px;top:545.8px;width:4.0px;height:4.0px;background:#d4465c;border-radius:50%"></div>
<div class="t " style="left:279.0px;top:541.2px;font-size:8px;line-height:14px;color:#333;font-weight:400;">已暂停</div>
<div class="r" style="left:305.5px;top:542.4px;width:20.5px;height:10.2px;background:#eef8ee;border:1px solid #d6ecd6;border-radius:2px;box-sizing:border-box"></div>
<svg class="r" style="left:308px;top:543.6px;" width="7" height="8" viewBox="0 0 7 8"><path d="M3.5 0.5L6.5 1.6V4A3.6 3.6 0 0 1 3.5 7.5 3.6 3.6 0 0 1 0.5 4V1.6Z" fill="#2d9d45"/><path d="M2 3.8L3.2 5 5 3" fill="none" stroke="#fff" stroke-width="0.8"/></svg>
<div class="t " style="left:317.0px;top:542.6px;font-size:7px;line-height:10px;color:#3a9d4e;font-weight:400;">保</div>
<div class="t " style="left:279.0px;top:554.1px;font-size:8px;line-height:14px;color:#999;font-weight:400;">手动暂停</div>
<div class="t" style="left:387px;top:540.9px;font-size:8px;line-height:14px;color:#888">每日预算 <b style="color:#333">300元</b></div>
<div class="t" style="left:387px;top:554.1px;font-size:8px;line-height:14px;color:#888">ROI目标 <b style="color:#333">3.26 (支付)</b></div>
<div class="r" style="left:461.0px;top:557.6px;width:7.5px;height:7.5px;background:#efa32b;border-radius:50%"></div>
<div class="r" style="left:464.2px;top:559.1px;width:1.1px;height:3.0px;background:#fff;"></div>
<div class="r" style="left:464.2px;top:562.8px;width:1.1px;height:1.0px;background:#fff;"></div>
<div class="t " style="left:509.0px;top:539.1px;font-size:8px;line-height:14px;color:#333;font-weight:400;">一键起量</div>
<div class="t " style="left:509.0px;top:554.2px;font-size:8px;line-height:14px;color:#333;font-weight:400;">搜索抢首屏</div>
<div class="t " style="left:605.5px;top:532.6px;font-size:8px;line-height:14px;color:#333;font-weight:400;">编辑</div>
<div class="t " style="left:605.5px;top:547.6px;font-size:8px;line-height:14px;color:#333;font-weight:400;">日志</div>
<div class="t " style="left:605.5px;top:562.2px;font-size:8px;line-height:14px;color:#333;font-weight:400;">删除</div>
<div class="t " style="right:553.5px;top:547.6px;font-size:8px;line-height:14px;color:#3a3a3a;font-weight:400;">0.00</div>
<div class="t " style="right:469.5px;top:547.6px;font-size:8px;line-height:14px;color:#3a3a3a;font-weight:400;">0</div>
<div class="t " style="right:369.5px;top:547.6px;font-size:8px;line-height:14px;color:#3a3a3a;font-weight:400;">0.00</div>
<div class="t " style="right:285.5px;top:547.6px;font-size:8px;line-height:14px;color:#3a3a3a;font-weight:400;">0.00</div>
<div class="t " style="right:177.5px;top:547.6px;font-size:8px;line-height:14px;color:#3a3a3a;font-weight:400;">0.00</div>
<div class="t " style="right:69.5px;top:547.6px;font-size:8px;line-height:14px;color:#3a3a3a;font-weight:400;">0.00</div>
<div class="r" style="left:30.0px;top:643.5px;width:1200.0px;height:1.0px;background:#ebebeb;"></div>
<div class="r" style="left:41.0px;top:608.0px;width:10.5px;height:10.5px;background:#fff;border:1px solid #d9d9d9;border-radius:2px;box-sizing:border-box"></div>
<div class="r" style="left:62.0px;top:609.0px;width:18.5px;height:10.0px;background:#c9c9c9;border-radius:5px"></div>
<div class="r" style="left:63.3px;top:610.3px;width:7.4px;height:7.4px;background:#fff;border-radius:50%"></div>
<div class="t " style="left:91.0px;top:589.0px;font-size:7.75px;line-height:14px;color:#333;font-weight:700;">0727 线上53退20保2.62</div>
<div class="t " style="left:91.0px;top:601.5px;font-size:7.65px;line-height:14px;color:#b5b5b5;font-weight:400;">ID：1838783541163209</div>
<div class="r" style="left:90.8px;top:617.3px;width:21px;height:21px;border-radius:50%;overflow:hidden"><svg width="21" height="21" viewBox="0 0 21 21" style="display:block"><defs><linearGradient id="avg5" x1="0" y1="0" x2="0" y2="1"><stop offset="0" stop-color="#f2efe2"/><stop offset="0.3" stop-color="#eee0bc"/><stop offset="0.38" stop-color="#d4a060"/><stop offset="0.5" stop-color="#6a4426"/><stop offset="0.75" stop-color="#3a2818"/><stop offset="1" stop-color="#2a1a10"/></linearGradient></defs><rect width="21" height="21" fill="url(#avg5)"/><path d="M11 8L21 8.5V16H11Z" fill="#8a5a32"/><path d="M0 9.5L9 8.5V15H0Z" fill="#2e261c"/><path d="M9.8 6.5H11.4L12.3 15.5H9Z" fill="#d6b28e"/><ellipse cx="10.5" cy="17" rx="7" ry="2.4" fill="#d6a050"/><path d="M0 19.5H21V21H0Z" fill="#3a2414"/></svg></div>
<svg class="r" style="left:115px;top:624.5px;" width="8" height="6" viewBox="0 0 8 6"><path d="M3 1H2A2 2 0 0 0 2 5H3M5 1H6A2 2 0 0 1 6 5H5M2.5 3H5.5" fill="none" stroke="#c5cbd6" stroke-width="0.9"/></svg>
<svg class="r" style="left:125px;top:617.3px" width="21" height="21" viewBox="0 0 21 21"><rect width="21" height="21" rx="2" fill="#d9302a"/><rect x="5" y="1" width="11" height="2" fill="#f5b8a0"/><path d="M8 6H12V11H8Z" fill="#fff"/><path d="M10 6H12V9H10Z" fill="#222"/><path d="M3 5L5 18M17 5L15 18" stroke="#f7d0c0" stroke-width="0.8"/><path d="M11 12H21V19A2 2 0 0 1 19 21H11Z" fill="#5a4a48" opacity="0.88"/><path d="M15.2 14.3L16.6 13.6V19.3" fill="none" stroke="#fff" stroke-width="1.3"/></svg>
<div class="t " style="left:149.0px;top:621.5px;font-size:8px;line-height:14px;color:#666;font-weight:400;">商品</div>
<svg class="r" style="left:166px;top:623.8px;" width="5" height="8" viewBox="0 0 5 8"><path d="M1 1L4 4 1 7" fill="none" stroke="#999" stroke-width="1"/></svg>
<svg class="r" style="left:183px;top:617.3px" width="21" height="21" viewBox="0 0 21 21"><rect width="21" height="21" rx="2" fill="#f3f3f3"/><rect x="5" y="1" width="12" height="19" fill="#8dc55c"/><rect x="5" y="1" width="12" height="5" fill="#c8c8e0"/><rect x="5" y="1" width="3" height="3" fill="#333"/><rect x="5" y="14" width="12" height="6" fill="#77b34a"/><path d="M9 8.5L13 10.5 9 12.5Z" fill="#fff" opacity="0.9"/></svg>
<div class="t " style="left:207.0px;top:621.5px;font-size:8px;line-height:14px;color:#666;font-weight:400;">素材</div>
<svg class="r" style="left:224.3px;top:623.8px;" width="5" height="8" viewBox="0 0 5 8"><path d="M1 1L4 4 1 7" fill="none" stroke="#999" stroke-width="1"/></svg>
<div class="r" style="left:271.9px;top:605.7px;width:4.0px;height:4.0px;background:#d4465c;border-radius:50%"></div>
<div class="t " style="left:279.0px;top:601.1px;font-size:8px;line-height:14px;color:#333;font-weight:400;">已暂停</div>
<div class="r" style="left:305.5px;top:602.3px;width:20.5px;height:10.2px;background:#eef8ee;border:1px solid #d6ecd6;border-radius:2px;box-sizing:border-box"></div>
<svg class="r" style="left:308px;top:603.5px;" width="7" height="8" viewBox="0 0 7 8"><path d="M3.5 0.5L6.5 1.6V4A3.6 3.6 0 0 1 3.5 7.5 3.6 3.6 0 0 1 0.5 4V1.6Z" fill="#2d9d45"/><path d="M2 3.8L3.2 5 5 3" fill="none" stroke="#fff" stroke-width="0.8"/></svg>
<div class="t " style="left:317.0px;top:602.5px;font-size:7px;line-height:10px;color:#3a9d4e;font-weight:400;">保</div>
<div class="t " style="left:279.0px;top:614.0px;font-size:8px;line-height:14px;color:#999;font-weight:400;">手动暂停</div>
<div class="t" style="left:387px;top:600.8px;font-size:8px;line-height:14px;color:#888">每日预算 <b style="color:#333">300元</b></div>
<div class="t" style="left:387px;top:614.0px;font-size:8px;line-height:14px;color:#888">ROI目标 <b style="color:#333">2.62 (支付)</b></div>
<div class="r" style="left:461.0px;top:617.5px;width:7.5px;height:7.5px;background:#efa32b;border-radius:50%"></div>
<div class="r" style="left:464.2px;top:619.0px;width:1.1px;height:3.0px;background:#fff;"></div>
<div class="r" style="left:464.2px;top:622.7px;width:1.1px;height:1.0px;background:#fff;"></div>
<div class="t " style="left:509.0px;top:599.0px;font-size:8px;line-height:14px;color:#333;font-weight:400;">一键起量</div>
<div class="t " style="left:509.0px;top:614.1px;font-size:8px;line-height:14px;color:#333;font-weight:400;">搜索抢首屏</div>
<div class="t " style="left:605.5px;top:592.5px;font-size:8px;line-height:14px;color:#333;font-weight:400;">编辑</div>
<div class="t " style="left:605.5px;top:607.5px;font-size:8px;line-height:14px;color:#333;font-weight:400;">日志</div>
<div class="t " style="left:605.5px;top:622.1px;font-size:8px;line-height:14px;color:#333;font-weight:400;">删除</div>
<div class="t " style="right:553.5px;top:607.5px;font-size:8px;line-height:14px;color:#3a3a3a;font-weight:400;">0.02</div>
<div class="t " style="right:469.5px;top:607.5px;font-size:8px;line-height:14px;color:#3a3a3a;font-weight:400;">0</div>
<div class="t " style="right:369.5px;top:607.5px;font-size:8px;line-height:14px;color:#3a3a3a;font-weight:400;">0.00</div>
<div class="t " style="right:285.5px;top:607.5px;font-size:8px;line-height:14px;color:#3a3a3a;font-weight:400;">0.00</div>
<div class="t " style="right:177.5px;top:607.5px;font-size:8px;line-height:14px;color:#3a3a3a;font-weight:400;">0.00</div>
<div class="t " style="right:69.5px;top:607.5px;font-size:8px;line-height:14px;color:#3a3a3a;font-weight:400;">0.00</div>
<div class="r" style="left:41.0px;top:667.9px;width:10.5px;height:10.5px;background:#fff;border:1px solid #d9d9d9;border-radius:2px;box-sizing:border-box"></div>
<div class="r" style="left:62.0px;top:668.9px;width:18.5px;height:10.0px;background:#c9c9c9;border-radius:5px"></div>
<div class="r" style="left:63.3px;top:670.2px;width:7.4px;height:7.4px;background:#fff;border-radius:50%"></div>
<div class="t " style="left:91.0px;top:648.9px;font-size:7.75px;line-height:14px;color:#333;font-weight:700;">0726线上45 退25 保3.29</div>
<div class="t " style="left:91.0px;top:661.4px;font-size:7.65px;line-height:14px;color:#b5b5b5;font-weight:400;">ID：1838692046083545</div>
<div class="r" style="left:90.8px;top:677.2px;width:21px;height:21px;border-radius:50%;overflow:hidden"><svg width="21" height="21" viewBox="0 0 21 21" style="display:block"><defs><linearGradient id="avg6" x1="0" y1="0" x2="0" y2="1"><stop offset="0" stop-color="#f2efe2"/><stop offset="0.3" stop-color="#eee0bc"/><stop offset="0.38" stop-color="#d4a060"/><stop offset="0.5" stop-color="#6a4426"/><stop offset="0.75" stop-color="#3a2818"/><stop offset="1" stop-color="#2a1a10"/></linearGradient></defs><rect width="21" height="21" fill="url(#avg6)"/><path d="M11 8L21 8.5V16H11Z" fill="#8a5a32"/><path d="M0 9.5L9 8.5V15H0Z" fill="#2e261c"/><path d="M9.8 6.5H11.4L12.3 15.5H9Z" fill="#d6b28e"/><ellipse cx="10.5" cy="17" rx="7" ry="2.4" fill="#d6a050"/><path d="M0 19.5H21V21H0Z" fill="#3a2414"/></svg></div>
<svg class="r" style="left:115px;top:684.4px;" width="8" height="6" viewBox="0 0 8 6"><path d="M3 1H2A2 2 0 0 0 2 5H3M5 1H6A2 2 0 0 1 6 5H5M2.5 3H5.5" fill="none" stroke="#c5cbd6" stroke-width="0.9"/></svg>
<svg class="r" style="left:125px;top:677.2px" width="21" height="21" viewBox="0 0 21 21"><rect width="21" height="21" rx="2" fill="#4a4a4a"/><path d="M11 12H21V19A2 2 0 0 1 19 21H11Z" fill="#5a4a48" opacity="0.88"/><path d="M15.2 14.3L16.6 13.6V19.3" fill="none" stroke="#fff" stroke-width="1.3"/></svg>
<div class="t " style="left:149.0px;top:681.4px;font-size:8px;line-height:14px;color:#666;font-weight:400;">商品</div>
<svg class="r" style="left:166px;top:683.6999999999999px;" width="5" height="8" viewBox="0 0 5 8"><path d="M1 1L4 4 1 7" fill="none" stroke="#999" stroke-width="1"/></svg>
<svg class="r" style="left:183px;top:677.2px" width="21" height="21" viewBox="0 0 21 21"><rect width="21" height="21" rx="2" fill="#f3f3f3"/><rect x="5" y="1" width="12" height="19" fill="#777"/><path d="M9 8.5L13 10.5 9 12.5Z" fill="#fff" opacity="0.9"/></svg>
<div class="t " style="left:207.0px;top:681.4px;font-size:8px;line-height:14px;color:#666;font-weight:400;">素材</div>
<svg class="r" style="left:224.3px;top:683.6999999999999px;" width="5" height="8" viewBox="0 0 5 8"><path d="M1 1L4 4 1 7" fill="none" stroke="#999" stroke-width="1"/></svg>
<div class="r" style="left:271.9px;top:665.6px;width:4.0px;height:4.0px;background:#d4465c;border-radius:50%"></div>
<div class="t " style="left:279.0px;top:661.0px;font-size:8px;line-height:14px;color:#333;font-weight:400;">已暂停</div>
<div class="r" style="left:305.5px;top:662.2px;width:20.5px;height:10.2px;background:#eef8ee;border:1px solid #d6ecd6;border-radius:2px;box-sizing:border-box"></div>
<svg class="r" style="left:308px;top:663.4px;" width="7" height="8" viewBox="0 0 7 8"><path d="M3.5 0.5L6.5 1.6V4A3.6 3.6 0 0 1 3.5 7.5 3.6 3.6 0 0 1 0.5 4V1.6Z" fill="#2d9d45"/><path d="M2 3.8L3.2 5 5 3" fill="none" stroke="#fff" stroke-width="0.8"/></svg>
<div class="t " style="left:317.0px;top:662.4px;font-size:7px;line-height:10px;color:#3a9d4e;font-weight:400;">保</div>
<div class="t " style="left:279.0px;top:673.9px;font-size:8px;line-height:14px;color:#999;font-weight:400;">手动暂停</div>
<div class="t" style="left:387px;top:660.6999999999999px;font-size:8px;line-height:14px;color:#888">每日预算 <b style="color:#333">300元</b></div>
<div class="t" style="left:387px;top:673.9px;font-size:8px;line-height:14px;color:#888">ROI目标 <b style="color:#333">3.29 (支付)</b></div>
<div class="r" style="left:461.0px;top:677.4px;width:7.5px;height:7.5px;background:#efa32b;border-radius:50%"></div>
<div class="r" style="left:464.2px;top:678.9px;width:1.1px;height:3.0px;background:#fff;"></div>
<div class="r" style="left:464.2px;top:682.6px;width:1.1px;height:1.0px;background:#fff;"></div>
<div class="t " style="left:509.0px;top:658.9px;font-size:8px;line-height:14px;color:#333;font-weight:400;">一键起量</div>
<div class="t " style="left:509.0px;top:674.0px;font-size:8px;line-height:14px;color:#333;font-weight:400;">搜索抢首屏</div>
<div class="t " style="left:605.5px;top:652.4px;font-size:8px;line-height:14px;color:#333;font-weight:400;">编辑</div>
<div class="t " style="left:605.5px;top:667.4px;font-size:8px;line-height:14px;color:#333;font-weight:400;">日志</div>
<div class="t " style="left:605.5px;top:682.0px;font-size:8px;line-height:14px;color:#333;font-weight:400;">删除</div>
<div class="t " style="right:553.5px;top:667.4px;font-size:8px;line-height:14px;color:#3a3a3a;font-weight:400;">0.00</div>
<div class="t " style="right:469.5px;top:667.4px;font-size:8px;line-height:14px;color:#3a3a3a;font-weight:400;">0</div>
<div class="t " style="right:369.5px;top:667.4px;font-size:8px;line-height:14px;color:#3a3a3a;font-weight:400;">0.00</div>
<div class="t " style="right:285.5px;top:667.4px;font-size:8px;line-height:14px;color:#3a3a3a;font-weight:400;">0.00</div>
<div class="t " style="right:177.5px;top:667.4px;font-size:8px;line-height:14px;color:#3a3a3a;font-weight:400;">0.00</div>
<div class="t " style="right:69.5px;top:667.4px;font-size:8px;line-height:14px;color:#3a3a3a;font-weight:400;">0.00</div>
<div class="r" style="left:634px;top:191px;width:396px;height:162.5px;background:#fdfdfd;border-radius:4px;box-shadow:0 2px 8px rgba(0,0,0,0.08)"></div>
<div class="r" style="left:670.0px;top:209.5px;width:339.0px;height:1.0px;background:#f0f1f3;"></div>
<div class="t " style="right:599.0px;top:203.0px;font-size:8px;line-height:14px;color:#999;font-weight:400;">20</div>
<div class="r" style="left:670.0px;top:239.5px;width:339.0px;height:1.0px;background:#f0f1f3;"></div>
<div class="t " style="right:599.0px;top:233.0px;font-size:8px;line-height:14px;color:#999;font-weight:400;">15</div>
<div class="r" style="left:670.0px;top:269.5px;width:339.0px;height:1.0px;background:#f0f1f3;"></div>
<div class="t " style="right:599.0px;top:263.0px;font-size:8px;line-height:14px;color:#999;font-weight:400;">10</div>
<div class="r" style="left:670.0px;top:299.5px;width:339.0px;height:1.0px;background:#f0f1f3;"></div>
<div class="t " style="right:599.0px;top:293.0px;font-size:8px;line-height:14px;color:#999;font-weight:400;">5</div>
<div class="r" style="left:670.0px;top:329.5px;width:339.0px;height:1.0px;background:#e9eaec;"></div>
<div class="t " style="right:599.0px;top:323.0px;font-size:8px;line-height:14px;color:#999;font-weight:400;">0</div>
<div class="t" style="left:635.0px;width:80px;text-align:center;top:335px;font-size:8px;line-height:14px;color:#999">2025-07-29 00:00</div>
<div class="t" style="left:705.9px;width:80px;text-align:center;top:335px;font-size:8px;line-height:14px;color:#999">2025-07-29 05:00</div>
<div class="t" style="left:776.7px;width:80px;text-align:center;top:335px;font-size:8px;line-height:14px;color:#999">2025-07-29 10:00</div>
<div class="t" style="left:847.5px;width:80px;text-align:center;top:335px;font-size:8px;line-height:14px;color:#999">2025-07-29 15:00</div>
<div class="t" style="left:918.4px;width:80px;text-align:center;top:335px;font-size:8px;line-height:14px;color:#999">2025-07-29 20:00</div>
<svg class="r" style="left:0;top:0" width="1259" height="708"><path d="M675.00 329.00 C675.00 329.00 682.09 329.00 689.17 329.00 C696.25 329.00 696.26 329.00 703.34 329.00 C710.42 329.00 710.42 329.00 717.51 329.00 C724.60 329.00 724.60 329.00 731.68 329.00 C738.76 329.00 738.77 329.00 745.85 329.00 C752.93 329.00 752.93 329.00 760.02 329.00 C767.11 329.00 767.11 329.00 774.19 329.00 C781.28 329.00 781.28 329.00 788.36 329.00 C795.44 329.00 800.82 329.00 802.53 329.00 C814.99 329.00 808.95 227.00 816.70 227.00 C823.12 227.00 818.78 290.02 830.87 311.00 C832.95 314.60 838.25 312.01 845.04 314.60 C852.42 317.41 852.25 321.80 859.21 321.80 C866.42 321.80 867.16 313.40 873.38 313.40 C881.33 313.40 880.61 329.00 887.55 329.00 C894.78 329.00 897.78 322.22 901.72 312.20 C911.95 286.22 909.70 257.00 915.89 257.00 C923.87 257.00 918.18 329.00 930.06 329.00 C932.35 329.00 937.14 329.00 944.23 329.00 C951.32 329.00 951.32 329.00 958.40 329.00 C965.48 329.00 965.48 329.00 972.57 329.00 C979.65 329.00 981.84 329.00 986.74 329.00 C996.01 329.00 1000.91 306.20 1000.91 306.20" fill="none" stroke="#3852c2" stroke-width="2"/></svg>
<svg class="r" style="left:0;top:0" width="1259" height="708"><path d="M158.81 151.82 C158.81 151.82 172.00 152.20 180.74 152.20 C182.87 152.20 184.59 152.20 185.98 151.11 C187.64 149.79 187.44 145.15 188.37 145.15 C189.25 145.15 188.98 150.74 190.51 150.87 C191.65 150.96 193.28 150.87 195.04 150.96 C196.42 151.04 197.03 152.20 198.37 152.20 C199.32 152.20 199.77 151.44 200.76 151.44 C204.72 151.44 210.77 151.82 210.77 151.82 M359.85 152.30 C359.85 152.30 372.48 152.30 380.11 152.30 C381.53 152.30 381.24 149.34 382.49 149.34 C383.90 149.34 385.70 149.34 386.78 149.34 C388.37 149.34 388.11 143.48 389.16 143.48 C390.78 143.48 391.31 152.30 393.45 152.30 C394.56 152.30 395.78 148.96 397.26 148.96 C398.64 148.96 398.91 152.30 400.60 152.30 C403.68 152.30 406.12 152.30 409.18 152.30 C410.51 152.30 411.56 149.44 411.56 149.44 M561.60 152.30 C561.60 152.30 574.40 152.30 581.86 152.30 C583.27 152.30 582.61 148.96 583.76 148.96 C585.09 148.96 586.96 150.15 588.05 150.15 C589.82 150.15 589.73 143.48 590.91 143.48 C592.49 143.48 592.92 152.30 594.96 152.30 C596.06 152.30 597.27 148.72 598.78 148.72 C600.23 148.72 600.55 152.30 602.35 152.30 C605.41 152.30 607.74 152.30 610.93 152.30 C612.12 152.30 613.31 150.15 613.31 150.15 M763.35 152.30 C763.35 152.30 777.40 152.30 783.37 152.30 C785.75 152.30 784.65 144.67 785.75 144.67 C786.65 144.67 786.73 148.93 788.37 150.63 C789.49 151.79 790.96 151.82 792.66 151.82 C793.44 151.82 793.83 151.11 794.57 151.11 C795.54 151.11 796.21 152.30 796.95 152.30 C798.88 152.30 799.81 146.82 801.24 146.82 C802.47 146.82 801.81 152.30 803.62 152.30 C806.38 152.30 809.26 152.30 812.68 152.30 C813.83 152.30 815.06 150.39 815.06 150.39 M964.14 152.30 C964.14 152.30 976.86 152.30 984.88 152.30 C986.87 152.30 987.35 149.95 989.17 149.44 C990.02 149.20 991.01 149.44 991.55 149.20 C992.82 148.64 992.79 143.96 993.70 143.96 C995.17 143.96 995.78 152.30 997.51 152.30 C998.45 152.30 999.14 148.25 1000.37 148.25 C1001.71 148.25 1002.05 152.30 1003.94 152.30 C1007.29 152.30 1009.87 152.30 1013.48 152.30 C1014.63 152.30 1015.86 150.39 1015.86 150.39 M1165.89 152.30 C1165.89 152.30 1178.54 152.30 1185.91 152.30 C1187.50 152.30 1187.04 148.72 1188.30 148.72 C1189.52 148.72 1191.11 150.39 1192.11 150.39 C1193.88 150.39 1193.96 143.72 1195.21 143.72 C1196.82 143.72 1197.29 152.30 1199.26 152.30 C1200.34 152.30 1201.43 148.49 1202.83 148.49 C1204.20 148.49 1204.39 152.30 1206.17 152.30 C1209.35 152.30 1211.83 152.30 1215.23 152.30 C1216.31 152.30 1217.37 150.39 1217.37 150.39 " fill="none" stroke="#3b57c4" stroke-width="1.4" stroke-linejoin="round"/></svg>
<svg class="r" style="left:700px;top:160px;" width="15" height="18" viewBox="0 0 15 18"><path d="M4.5 1.5C5.5 1.5 5.8 2.2 5.8 3V8.2L6.2 7.9C6.8 7.4 7.8 7.6 8 8.3 8.6 7.9 9.5 8 9.8 8.8 10.4 8.5 11.4 8.7 11.6 9.6V13C11.6 15 10.5 16.5 8.5 16.5H7C5.6 16.5 4.7 15.8 4 14.8L1.6 11.3C1.1 10.6 1.4 9.8 2.1 9.7 2.6 9.6 3 9.9 3.3 10.3V3C3.3 2.2 3.6 1.5 4.5 1.5Z" fill="#fff" stroke="#222" stroke-width="0.9"/><path d="M5.8 8.5V12M8 8.5V12M9.8 9V12" stroke="#222" stroke-width="0.6"/></svg>
<div class="r" style="left:31.5px;top:672.0px;width:1199.0px;height:9.5px;background:#f1f1f1;"></div>
<div class="r" style="left:41.0px;top:672.5px;width:1020.0px;height:8.5px;background:#c1c1c1;"></div>
<svg class="r" style="left:33px;top:673.5px;" width="6" height="7" viewBox="0 0 6 7"><path d="M4.5 0.5L1 3.5 4.5 6.5Z" fill="#777"/></svg>
<svg class="r" style="left:1222px;top:673.5px;" width="6" height="7" viewBox="0 0 6 7"><path d="M1.5 0.5L5 3.5 1.5 6.5Z" fill="#555"/></svg>
<div class="r" style="left:14.0px;top:681.5px;width:1231.0px;height:1.5px;background:#fbfbfb;"></div>
<div class="r" style="left:1229.0px;top:462.0px;width:40.0px;height:54.0px;background:#fdfdfd;border-radius:20px 0 0 20px;box-shadow:0 0 6px rgba(0,0,0,0.08)"></div>
<div class="r" style="left:1236.0px;top:473.0px;width:17.0px;height:17.0px;background:conic-gradient(from 0deg,#22b8d8 0deg,#f0607a 90deg,#f7a04a 160deg,#2f7ef0 230deg,#2f6ff0 300deg,#22b8d8 360deg);border-radius:50%"></div>
<div class="r" style="left:1239.0px;top:476.0px;width:11.0px;height:11.0px;background:#fdfdfd;border-radius:50%"></div>
<div class="r" style="left:1241.5px;top:479.5px;width:2.0px;height:4.0px;background:#1e2b48;border-radius:1px"></div>
<div class="r" style="left:1245.5px;top:479.5px;width:2.0px;height:4.0px;background:#1e2b48;border-radius:1px"></div>
<div class="t " style="left:1232.5px;top:494.5px;font-size:7.6px;line-height:14px;color:#333;font-weight:400;">智投星</div>
<div class="r" style="left:1196.0px;top:604.2px;width:38.0px;height:38.0px;background:#fbfbfd;border-radius:50%;box-shadow:0 1px 5px rgba(0,0,0,0.07)"></div>
<div class="r" style="left:1200.0px;top:608.2px;width:30.0px;height:30.0px;background:linear-gradient(160deg,#4b8df6,#5a8ff0);border-radius:50%"></div>
<svg class="r" style="left:1205px;top:613.2px;" width="20" height="20" viewBox="0 0 20 20"><path d="M5.6 14.2A6.3 6.3 0 1 1 14.4 14.2" fill="none" stroke="#e6efff" stroke-width="1.1"/><path d="M7.6 12A3.5 3.5 0 1 1 12.4 12" fill="none" stroke="#e6efff" stroke-width="1.1"/><circle cx="10" cy="9.5" r="1.3" fill="#fff"/><path d="M10 10V16.5M8.3 15L10 17 11.7 15" fill="none" stroke="#fff" stroke-width="1.3"/></svg>
<div class="r" style="left:0.0px;top:683.0px;width:1259.0px;height:25.0px;background:#dde5ed;"></div>
<svg class="r" style="left:9px;top:690px;" width="12" height="12" viewBox="0 0 12 12"><rect x="0" y="0" width="5.2" height="5.2" fill="#1c1c1c"/><rect x="6" y="0" width="5.2" height="5.2" fill="#1c1c1c"/><rect x="0" y="6" width="5.2" height="5.2" fill="#1c1c1c"/><rect x="6" y="6" width="5.2" height="5.2" fill="#1c1c1c"/></svg>
<div class="r" style="left:32.0px;top:683.0px;width:187.0px;height:25.0px;background:#f7f8fa;"></div>
<svg class="r" style="left:37px;top:689px;" width="13" height="13" viewBox="0 0 13 13"><circle cx="7.5" cy="5.5" r="4" fill="none" stroke="#333" stroke-width="1.2"/><path d="M4.6 8.4L1 12" stroke="#333" stroke-width="1.3"/></svg>
<div class="t " style="left:57.0px;top:689.0px;font-size:9.5px;line-height:14px;color:#222;font-weight:400;">搜索</div>
<svg class="r" style="left:168px;top:683px;" width="51" height="25" viewBox="0 0 51 25"><path d="M12 25L22 12 30 3 34 4 40 6 51 9V25Z" fill="#b9a3d6"/><path d="M28 6L31 2.5 34 5Z" fill="#e8e0ee"/><path d="M4 25L10 15 20 12 30 13 40 14 51 16V25Z" fill="#e2b062"/><path d="M20 12L26 10 32 14Z" fill="#a77b45"/><path d="M8 25L9 19 18 17.5 31 18 33 21 25 24Z" fill="#3fb6e6"/><path d="M3 25L6 14 8 25Z" fill="#245a52"/><path d="M30 25L32 16 35 25Z" fill="#2e6b4e"/><path d="M44 25L47 12 51 14V25Z" fill="#3f7a5a"/><path d="M38 25L41 17 46 25Z" fill="#c9872e"/></svg>
<svg class="r" style="left:229px;top:689.5px;" width="13" height="12" viewBox="0 0 13 12"><path d="M0.5 1.3C2 0.8 6 0.8 7.5 1.3M0.5 10.7C2 11.2 6 11.2 7.5 10.7" fill="none" stroke="#222" stroke-width="1.3"/><rect x="1.4" y="2" width="1.3" height="8" fill="#222"/><rect x="5.3" y="2" width="1.3" height="8" fill="#222"/><circle cx="10.8" cy="4" r="0.8" fill="#222"/><rect x="10.2" y="6" width="1.2" height="5" fill="#222"/></svg>
<svg class="r" style="left:261px;top:688px;" width="16" height="15" viewBox="0 0 16 15"><path d="M0.5 2.5Q0.5 1.5 1.5 1.5H5.5L7 3H14.5Q15.5 3 15.5 4V13Q15.5 14 14.5 14H1.5Q0.5 14 0.5 13Z" fill="#f0b93a"/><rect x="0.5" y="5" width="15" height="9" rx="1" fill="#fcd462"/><path d="M4.5 14V10.5Q4.5 9 6 9H10Q11.5 9 11.5 10.5V14H9.8V11H6.2V14Z" fill="#2f7bd8"/></svg>
<svg class="r" style="left:293px;top:688px;" width="17" height="16" viewBox="0 0 17 16"><defs><linearGradient id="eg1" x1="0" y1="1" x2="1" y2="0"><stop offset="0" stop-color="#0c59b5"/><stop offset="0.55" stop-color="#1b8fe0"/><stop offset="1" stop-color="#49d07a"/></linearGradient></defs><circle cx="8.5" cy="8" r="7.8" fill="url(#eg1)"/><path d="M4 9.5C4 6.5 6.5 5 8.8 5 11.5 5 13 6.8 13 8.5 13 9.8 11.8 10.5 10 10.5H6.5C6.8 12.5 9 13.5 11.5 13" fill="none" stroke="#fff" stroke-width="0" /><path d="M3.2 10.5C3.5 13.5 6.2 15.6 9.2 15.6 7 14.6 5.8 12.6 6.2 10.6 6.6 8.4 8.5 7.4 10.3 7.6 12.2 7.9 13 9.4 12.6 10.6 14.8 10.6 16 9.5 16 8.2" fill="#e9f4ff" opacity="0.95"/><ellipse cx="9.6" cy="10.8" rx="2.6" ry="1.9" fill="#1367c8"/></svg>
<svg class="r" style="left:325px;top:688px;" width="17" height="16" viewBox="0 0 17 16"><path d="M5.5 3.5V2.5Q5.5 0.8 8.5 0.8 11.5 0.8 11.5 2.5V3.5" fill="none" stroke="#2ea3e6" stroke-width="1.3"/><rect x="0.8" y="3.5" width="15.4" height="12" rx="2" fill="#1a3f78"/><rect x="5" y="6" width="3" height="3" fill="#f25022"/><rect x="9" y="6" width="3" height="3" fill="#7fba00"/><rect x="5" y="10" width="3" height="3" fill="#00a4ef"/><rect x="9" y="10" width="3" height="3" fill="#ffb900"/></svg>
<svg class="r" style="left:358px;top:688px;" width="16" height="16" viewBox="0 0 16 16"><path d="M6 2H14Q15.5 2 15.5 3.5V13Q15.5 15 13.5 15H6Z" fill="#28a8ea"/><path d="M6 8L15.5 4V15H6Z" fill="#50d9ff" opacity="0.7"/><rect x="0.5" y="4" width="9" height="9" rx="1.5" fill="#0a64c4"/><ellipse cx="5" cy="8.5" rx="2.3" ry="2.6" fill="none" stroke="#fff" stroke-width="1.3"/></svg>
<svg class="r" style="left:390px;top:690px;" width="17" height="12" viewBox="0 0 17 12"><path d="M1 1.5L4.5 10.5 8.5 3.5 12.5 10.5 16 1.5" fill="none" stroke="#e8402c" stroke-width="2.3" stroke-linejoin="round"/><path d="M6.5 1.5H10.5" stroke="#f08a3a" stroke-width="1.5"/></svg>
<svg class="r" style="left:422px;top:687px;" width="17" height="17" viewBox="0 0 17 17"><rect x="0.5" y="0.5" width="16" height="16" rx="3" fill="#fbfbfe"/><defs><linearGradient id="pg1" x1="0" y1="0" x2="1" y2="1"><stop offset="0" stop-color="#9a5cf0"/><stop offset="1" stop-color="#4a7cf0"/></linearGradient></defs><path d="M3 4.5Q3 3 4.5 3H12.5Q14 3 14 4.5V10Q14 11.5 12.5 11.5H7L4.5 13.5V11.5Q3 11.5 3 10Z" fill="url(#pg1)"/><rect x="5.5" y="6" width="6" height="2.2" rx="0.6" fill="none" stroke="#e0e4ff" stroke-width="0.8"/></svg>
<div class="r" style="left:447.0px;top:683.0px;width:31.5px;height:25.0px;background:#f6b07a;"></div>
<svg class="r" style="left:453.5px;top:688px;" width="18" height="15" viewBox="0 0 18 15"><path d="M8 1.5C4.2 1.5 1.5 3.8 1.5 6.8 1.5 8.5 2.4 10 3.9 11L3.5 13.5 6.4 12C7 12.1 7.5 12.2 8 12.2 11.8 12.2 14.5 9.9 14.5 6.8 14.5 3.8 11.8 1.5 8 1.5Z" fill="none" stroke="#2a7ad8" stroke-width="1.6"/><path d="M12 9.5L16.5 13 12.5 13.5Z" fill="#f2c12a"/></svg>
<div class="r" style="left:479.0px;top:683.0px;width:32.0px;height:25.0px;background:#e6ecf2;"></div>
<svg class="r" style="left:487.5px;top:688.5px;" width="15" height="15" viewBox="0 0 15 15"><circle cx="7.5" cy="7.5" r="7" fill="#2d64e6"/><path d="M5 4.5H8Q11 4.5 11 7.5 11 10.5 8 10.5H5Z" fill="#fff"/><path d="M5 10.5L7 8.5" stroke="#2d64e6" stroke-width="1"/></svg>
<div class="r" style="left:511.0px;top:683.0px;width:29.0px;height:25.0px;background:#e6ecf2;"></div>
<svg class="r" style="left:519.5px;top:688px;" width="15" height="16" viewBox="0 0 15 16"><rect x="0.5" y="0.5" width="14" height="15" rx="3" fill="#2f7fe6"/><rect x="3" y="3" width="2.5" height="7" fill="#cfe3ff"/><rect x="6.5" y="4" width="5.5" height="6" rx="1" fill="#e8f2ff"/><path d="M3 12H12" stroke="#9cc4ff" stroke-width="1"/></svg>
<svg class="r" style="left:550.5px;top:687.5px;" width="17" height="17" viewBox="0 0 17 17"><rect x="0" y="0" width="17" height="17" rx="3.5" fill="#0f0f10"/><path d="M9.5 3.2V10.6A2.4 2.4 0 1 1 7.2 8.2" fill="none" stroke="#25f4ee" stroke-width="1.5" transform="translate(-0.6 0.5)"/><path d="M9.5 3.2V10.6A2.4 2.4 0 1 1 7.2 8.2" fill="none" stroke="#fe2c55" stroke-width="1.5" transform="translate(0.6 -0.3)"/><path d="M9.5 3.2V10.6A2.4 2.4 0 1 1 7.2 8.2M9.5 3.2C10 4.8 11.2 5.8 12.8 5.9" fill="none" stroke="#fff" stroke-width="1.5"/></svg>
<svg class="r" style="left:583px;top:687.5px;" width="17" height="17" viewBox="0 0 17 17"><rect x="0" y="0" width="17" height="17" rx="3.5" fill="#22c160"/><ellipse cx="7" cy="7.3" rx="4.6" ry="3.7" fill="#fff"/><ellipse cx="10.8" cy="10" rx="3.8" ry="3" fill="#fff" stroke="#22c160" stroke-width="0.7"/><circle cx="5.5" cy="6.5" r="0.6" fill="#22c160"/><circle cx="8.3" cy="6.5" r="0.6" fill="#22c160"/></svg>
<div class="r" style="left:256.0px;top:706.5px;width:26.0px;height:1.5px;background:#8fb3de;"></div>
<div class="r" style="left:288.0px;top:706.5px;width:26.0px;height:1.5px;background:#8fb3de;"></div>
<div class="r" style="left:385.0px;top:706.5px;width:26.0px;height:1.5px;background:#8fb3de;"></div>
<div class="r" style="left:416.5px;top:706.5px;width:26.5px;height:1.5px;background:#8fb3de;"></div>
<div class="r" style="left:479.0px;top:706.5px;width:30.5px;height:1.5px;background:#8fb3de;"></div>
<div class="r" style="left:514.0px;top:706.5px;width:25.0px;height:1.5px;background:#8fb3de;"></div>
<div class="r" style="left:546.5px;top:706.5px;width:25.0px;height:1.5px;background:#8fb3de;"></div>
<div class="r" style="left:578.5px;top:706.5px;width:24.5px;height:1.5px;background:#8fb3de;"></div>
<svg class="r" style="left:1088px;top:692px;" width="10" height="7" viewBox="0 0 10 7"><path d="M1 5.5L5 1.5 9 5.5" fill="none" stroke="#222" stroke-width="1.1"/></svg>
<svg class="r" style="left:1103px;top:690px;" width="12" height="11" viewBox="0 0 12 11"><path d="M3 8.5A2.5 2.5 0 0 1 3.5 3.5 3.5 3.5 0 0 1 10 4.5 2 2 0 0 1 10 8.5Z" fill="none" stroke="#222" stroke-width="1.2"/><path d="M1 1L11 10" stroke="#222" stroke-width="1.2"/></svg>
<svg class="r" style="left:1120px;top:689px;" width="9" height="13" viewBox="0 0 9 13"><rect x="2.5" y="0.5" width="4" height="8" rx="2" fill="#222"/><path d="M1 6A3.5 3.5 0 0 0 8 6M4.5 10V12.5" fill="none" stroke="#222" stroke-width="1"/></svg>
<svg class="r" style="left:1135px;top:690px;" width="12" height="11" viewBox="0 0 12 11"><rect x="0.5" y="0.5" width="11" height="7" fill="none" stroke="#222"/><path d="M6 8V10M3 10.5H9" stroke="#222"/></svg>
<svg class="r" style="left:1151px;top:690px;" width="10" height="11" viewBox="0 0 10 11"><path d="M1 3.5H3L6 1V10L3 7.5H1Z" fill="none" stroke="#222" stroke-width="0.9"/><path d="M7.5 3.5A2.5 2.5 0 0 1 7.5 7.5M8.5 2A4 4 0 0 1 8.5 9" fill="none" stroke="#222" stroke-width="0.8"/></svg>
<div class="t " style="left:1166.0px;top:688.5px;font-size:10px;line-height:14px;color:#222;font-weight:400;">中</div>
<div class="t " style="left:1193.0px;top:684.0px;font-size:8.5px;line-height:11px;color:#222;font-weight:400;">20:29</div>
<div class="t " style="left:1183.0px;top:697.3px;font-size:8.6px;line-height:11px;color:#222;font-weight:400;">2025/8/27</div>
<svg class="r" style="left:1234px;top:689px;" width="12" height="13" viewBox="0 0 12 13"><path d="M0.5 0.5H11.5V8.5H7L5.5 11 4 8.5H0.5Z" fill="#1a1a1a"/><path d="M2.5 3H9.5M2.5 5.5H7" stroke="#fff" stroke-width="0.8"/></svg>
</body></html>
